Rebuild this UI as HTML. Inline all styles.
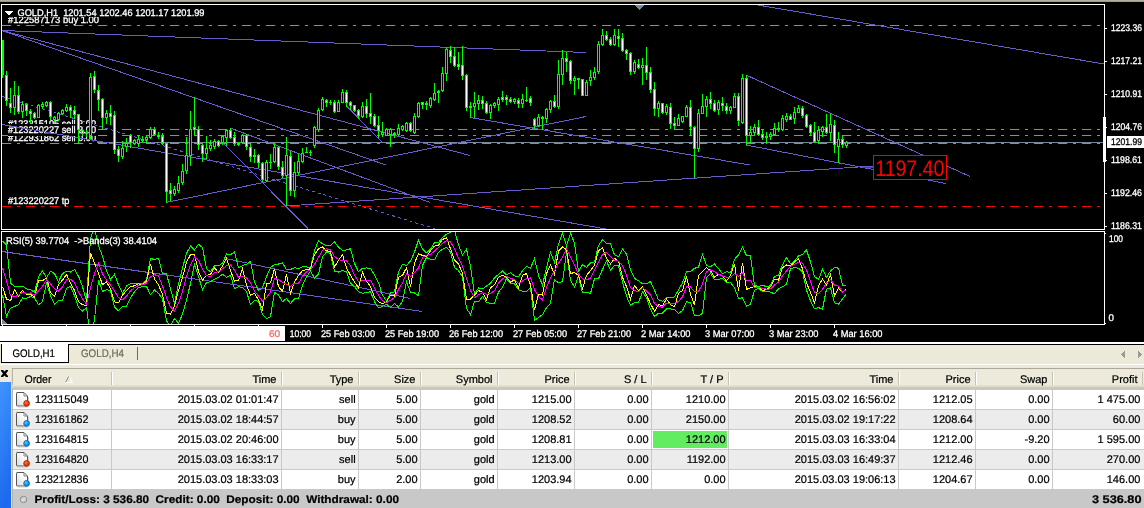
<!DOCTYPE html><html><head><meta charset="utf-8"><title>GOLD,H1</title>
<style>html,body{margin:0;padding:0;background:#ECE9D8;overflow:hidden}svg{display:block;will-change:transform}text{font-family:"Liberation Sans",sans-serif;white-space:pre}</style>
</head><body>
<svg width="1144" height="508" viewBox="0 0 1144 508" shape-rendering="crispEdges" text-rendering="geometricPrecision">
<rect x="0" y="0" width="1144" height="508" fill="#ECE9D8" />
<rect x="0" y="0" width="1144" height="1" fill="#B3AF9C" />
<rect x="0" y="1" width="1144" height="1" fill="#A09C8A" />
<rect x="0" y="2" width="1144" height="340" fill="#000" />
<defs><clipPath id="cm"><rect x="2" y="5" width="1102" height="224"/></clipPath><clipPath id="ci"><rect x="2" y="232" width="1102" height="92"/></clipPath></defs>
<g clip-path="url(#cm)">
<path d="M2 25.5h9M17 25.5h3M26 25.5h9M41 25.5h3M50 25.5h9M65 25.5h3M74 25.5h9M89 25.5h3M98 25.5h9M113 25.5h3M122 25.5h9M137 25.5h3M146 25.5h9M161 25.5h3M170 25.5h9M185 25.5h3M194 25.5h9M209 25.5h3M218 25.5h9M233 25.5h3M242 25.5h9M257 25.5h3M266 25.5h9M281 25.5h3M290 25.5h9M305 25.5h3M314 25.5h9M329 25.5h3M338 25.5h9M353 25.5h3M362 25.5h9M377 25.5h3M386 25.5h9M401 25.5h3M410 25.5h9M425 25.5h3M434 25.5h9M449 25.5h3M458 25.5h9M473 25.5h3M482 25.5h9M497 25.5h3M506 25.5h9M521 25.5h3M530 25.5h9M545 25.5h3M554 25.5h9M569 25.5h3M578 25.5h9M593 25.5h3M602 25.5h9M617 25.5h3M626 25.5h9M641 25.5h3M650 25.5h9M665 25.5h3M674 25.5h9M689 25.5h3M698 25.5h9M713 25.5h3M722 25.5h9M737 25.5h3M746 25.5h9M761 25.5h3M770 25.5h9M785 25.5h3M794 25.5h9M809 25.5h3M818 25.5h9M833 25.5h3M842 25.5h9M857 25.5h3M866 25.5h9M881 25.5h3M890 25.5h9M905 25.5h3M914 25.5h9M929 25.5h3M938 25.5h9M953 25.5h3M962 25.5h9M977 25.5h3M986 25.5h9M1001 25.5h3M1010 25.5h9M1025 25.5h3M1034 25.5h9M1049 25.5h3M1058 25.5h9M1073 25.5h3M1082 25.5h9M1097 25.5h3" stroke="#32CD32" stroke-width="1" fill="none"/>
<path d="M26 129.5h9M41 129.5h3M50 129.5h9M65 129.5h3M74 129.5h9M89 129.5h3M98 129.5h9M113 129.5h3M122 129.5h9M137 129.5h3M146 129.5h9M161 129.5h3M170 129.5h9M185 129.5h3M194 129.5h9M209 129.5h3M218 129.5h9M233 129.5h3M242 129.5h9M257 129.5h3M266 129.5h9M281 129.5h3M290 129.5h9M305 129.5h3M314 129.5h9M329 129.5h3M338 129.5h9M353 129.5h3M362 129.5h9M377 129.5h3M386 129.5h9M401 129.5h3M410 129.5h9M425 129.5h3M434 129.5h9M449 129.5h3M458 129.5h9M473 129.5h3M482 129.5h9M497 129.5h3M506 129.5h9M521 129.5h3M530 129.5h9M545 129.5h3M554 129.5h9M569 129.5h3M578 129.5h9M593 129.5h3M602 129.5h9M617 129.5h3M626 129.5h9M641 129.5h3M650 129.5h9M665 129.5h3M674 129.5h9M689 129.5h3M698 129.5h9M713 129.5h3M722 129.5h9M737 129.5h3M746 129.5h9M761 129.5h3M770 129.5h9M785 129.5h3M794 129.5h9M809 129.5h3M818 129.5h9M833 129.5h3M842 129.5h9M857 129.5h3M866 129.5h9M881 129.5h3M890 129.5h9M905 129.5h3M914 129.5h9M929 129.5h3M938 129.5h9M953 129.5h3M962 129.5h9M977 129.5h3M986 129.5h9M1001 129.5h3M1010 129.5h9M1025 129.5h3M1034 129.5h9M1049 129.5h3M1058 129.5h9M1073 129.5h3M1082 129.5h9M1097 129.5h3" stroke="#32CD32" stroke-width="1" fill="none"/>
<path d="M2 135.5h9M17 135.5h3M26 135.5h9M41 135.5h3M50 135.5h9M65 135.5h3M74 135.5h9M89 135.5h3M98 135.5h9M113 135.5h3M122 135.5h9M137 135.5h3M146 135.5h9M161 135.5h3M170 135.5h9M185 135.5h3M194 135.5h9M209 135.5h3M218 135.5h9M233 135.5h3M242 135.5h9M257 135.5h3M266 135.5h9M281 135.5h3M290 135.5h9M305 135.5h3M314 135.5h9M329 135.5h3M338 135.5h9M353 135.5h3M362 135.5h9M377 135.5h3M386 135.5h9M401 135.5h3M410 135.5h9M425 135.5h3M434 135.5h9M449 135.5h3M458 135.5h9M473 135.5h3M482 135.5h9M497 135.5h3M506 135.5h9M521 135.5h3M530 135.5h9M545 135.5h3M554 135.5h9M569 135.5h3M578 135.5h9M593 135.5h3M602 135.5h9M617 135.5h3M626 135.5h9M641 135.5h3M650 135.5h9M665 135.5h3M674 135.5h9M689 135.5h3M698 135.5h9M713 135.5h3M722 135.5h9M737 135.5h3M746 135.5h9M761 135.5h3M770 135.5h9M785 135.5h3M794 135.5h9M809 135.5h3M818 135.5h9M833 135.5h3M842 135.5h9M857 135.5h3M866 135.5h9M881 135.5h3M890 135.5h9M905 135.5h3M914 135.5h9M929 135.5h3M938 135.5h9M953 135.5h3M962 135.5h9M977 135.5h3M986 135.5h9M1001 135.5h3M1010 135.5h9M1025 135.5h3M1034 135.5h9M1049 135.5h3M1058 135.5h9M1073 135.5h3M1082 135.5h9M1097 135.5h3" stroke="#32CD32" stroke-width="1" fill="none"/>
<path d="M2 206.5h9M17 206.5h3M26 206.5h9M41 206.5h3M50 206.5h9M65 206.5h3M74 206.5h9M89 206.5h3M98 206.5h9M113 206.5h3M122 206.5h9M137 206.5h3M146 206.5h9M161 206.5h3M170 206.5h9M185 206.5h3M194 206.5h9M209 206.5h3M218 206.5h9M233 206.5h3M242 206.5h9M257 206.5h3M266 206.5h9M281 206.5h3M290 206.5h9M305 206.5h3M314 206.5h9M329 206.5h3M338 206.5h9M353 206.5h3M362 206.5h9M377 206.5h3M386 206.5h9M401 206.5h3M410 206.5h9M425 206.5h3M434 206.5h9M449 206.5h3M458 206.5h9M473 206.5h3M482 206.5h9M497 206.5h3M506 206.5h9M521 206.5h3M530 206.5h9M545 206.5h3M554 206.5h9M569 206.5h3M578 206.5h9M593 206.5h3M602 206.5h9M617 206.5h3M626 206.5h9M641 206.5h3M650 206.5h9M665 206.5h3M674 206.5h9M689 206.5h3M698 206.5h9M713 206.5h3M722 206.5h9M737 206.5h3M746 206.5h9M761 206.5h3M770 206.5h9M785 206.5h3M794 206.5h9M809 206.5h3M818 206.5h9M833 206.5h3M842 206.5h9M857 206.5h3M866 206.5h9M881 206.5h3M890 206.5h9M905 206.5h3M914 206.5h9M929 206.5h3M938 206.5h9M953 206.5h3M962 206.5h9M977 206.5h3M986 206.5h9M1001 206.5h3M1010 206.5h9M1025 206.5h3M1034 206.5h9M1049 206.5h3M1058 206.5h9M1073 206.5h3M1082 206.5h9M1097 206.5h3" stroke="#FF0000" stroke-width="1" fill="none"/>
<rect x="8" y="13" width="92" height="12" fill="#000" />
<text x="8" y="23" font-size="9.75" fill="#fff" textLength="91" lengthAdjust="spacingAndGlyphs" stroke="#fff" stroke-width="0.3" >#122587173 buy 1.00</text>
<rect x="8" y="118" width="89" height="11" fill="#000" />
<text x="8" y="127" font-size="9.75" fill="#fff" textLength="88" lengthAdjust="spacingAndGlyphs" stroke="#fff" stroke-width="0.3" >#123215105 sell 2.00</text>
<rect x="8" y="132" width="89" height="11" fill="#000" />
<text x="8" y="141" font-size="9.75" fill="#fff" textLength="88" lengthAdjust="spacingAndGlyphs" stroke="#fff" stroke-width="0.3" >#122931862 sell 0.00</text>
<rect x="8" y="124" width="89" height="12" fill="#000" />
<text x="8" y="133" font-size="9.75" fill="#fff" textLength="88" lengthAdjust="spacingAndGlyphs" stroke="#fff" stroke-width="0.3" >#123220227 sell 2.00</text>
<rect x="8" y="195" width="62" height="11" fill="#000" />
<text x="8" y="204" font-size="9.75" fill="#fff" textLength="61.5" lengthAdjust="spacingAndGlyphs" stroke="#fff" stroke-width="0.3" >#123220227 tp</text>
<path d="M2 143.5h9M17 143.5h3M26 143.5h9M41 143.5h3M50 143.5h9M65 143.5h3M74 143.5h9M89 143.5h3M98 143.5h9M113 143.5h3M122 143.5h9M137 143.5h3M146 143.5h9M161 143.5h3M170 143.5h9M185 143.5h3M194 143.5h9M209 143.5h3M218 143.5h9M233 143.5h3M242 143.5h9M257 143.5h3M266 143.5h9M281 143.5h3M290 143.5h9M305 143.5h3M314 143.5h9M329 143.5h3M338 143.5h9M353 143.5h3M362 143.5h9M377 143.5h3M386 143.5h9M401 143.5h3M410 143.5h9M425 143.5h3M434 143.5h9M449 143.5h3M458 143.5h9M473 143.5h3M482 143.5h9M497 143.5h3M506 143.5h9M521 143.5h3M530 143.5h9M545 143.5h3M554 143.5h9M569 143.5h3M578 143.5h9M593 143.5h3M602 143.5h9M617 143.5h3M626 143.5h9M641 143.5h3M650 143.5h9M665 143.5h3M674 143.5h9M689 143.5h3M698 143.5h9M713 143.5h3M722 143.5h9M737 143.5h3M746 143.5h9M761 143.5h3M770 143.5h9M785 143.5h3M794 143.5h9M809 143.5h3M818 143.5h9M833 143.5h3M842 143.5h9M857 143.5h3M866 143.5h9M881 143.5h3M890 143.5h9M905 143.5h3M914 143.5h9M929 143.5h3M938 143.5h9M953 143.5h3M962 143.5h9M977 143.5h3M986 143.5h9M1001 143.5h3M1010 143.5h9M1025 143.5h3M1034 143.5h9M1049 143.5h3M1058 143.5h9M1073 143.5h3M1082 143.5h9M1097 143.5h3" stroke="#32CD32" stroke-width="1" fill="none"/>
<rect x="3" y="6" width="204" height="11" fill="#000" />
<path d="M5 11h8l-4 4.5z" fill="#fff"/>
<text x="17.5" y="16" font-size="9.75" fill="#fff" textLength="187" lengthAdjust="spacingAndGlyphs" stroke="#fff" stroke-width="0.3" >GOLD,H1  1201.54 1202.46 1201.17 1201.99</text>
<rect x="97" y="142" width="1007" height="1" fill="#778899" />
<line x1="2" y1="30.5" x2="586" y2="52.5" stroke="#6A5ACD" stroke-width="1"/>
<line x1="2" y1="30.5" x2="470" y2="155.5" stroke="#6A5ACD" stroke-width="1"/>
<line x1="2" y1="30.5" x2="386" y2="165" stroke="#6A5ACD" stroke-width="1"/>
<line x1="2" y1="124.5" x2="612" y2="230" stroke="#6A5ACD" stroke-width="1"/>
<line x1="2" y1="96.5" x2="436" y2="229" stroke="#6A5ACD" stroke-width="1" stroke-dasharray="3 3"/>
<line x1="166" y1="202.5" x2="586" y2="116.5" stroke="#6A5ACD" stroke-width="1"/>
<line x1="286" y1="206" x2="873" y2="166" stroke="#6A5ACD" stroke-width="1"/>
<line x1="230" y1="128" x2="430" y2="202.5" stroke="#6A5ACD" stroke-width="1"/>
<line x1="222" y1="142" x2="308" y2="228.5" stroke="#6A5ACD" stroke-width="1"/>
<line x1="346" y1="105.5" x2="382" y2="142" stroke="#6A5ACD" stroke-width="1"/>
<line x1="470" y1="117.5" x2="750" y2="165" stroke="#6A5ACD" stroke-width="1"/>
<line x1="746" y1="75" x2="970" y2="176.5" stroke="#6A5ACD" stroke-width="1"/>
<line x1="746" y1="145" x2="946" y2="183.5" stroke="#6A5ACD" stroke-width="1"/>
<line x1="740" y1="2" x2="1104" y2="64" stroke="#6A5ACD" stroke-width="1"/>
<rect x="2" y="40" width="1" height="38" fill="#00FF00" />
<rect x="1" y="40" width="3" height="35" fill="#00FF00" />
<rect x="2" y="41" width="1" height="33" fill="#00FF00" />
<rect x="6" y="71" width="1" height="35" fill="#00FF00" />
<rect x="5" y="75" width="3" height="26" fill="#00FF00" />
<rect x="6" y="76" width="1" height="24" fill="#fff" />
<rect x="10" y="88" width="1" height="25" fill="#00FF00" />
<rect x="9" y="103" width="3" height="5" fill="#00FF00" />
<rect x="10" y="104" width="1" height="3" fill="#fff" />
<rect x="14" y="81" width="1" height="34" fill="#00FF00" />
<rect x="13" y="95" width="3" height="13" fill="#00FF00" />
<rect x="14" y="96" width="1" height="11" fill="#000" />
<rect x="18" y="86" width="1" height="28" fill="#00FF00" />
<rect x="17" y="95" width="3" height="17" fill="#00FF00" />
<rect x="18" y="96" width="1" height="15" fill="#fff" />
<rect x="22" y="101" width="1" height="17" fill="#00FF00" />
<rect x="21" y="104" width="3" height="8" fill="#00FF00" />
<rect x="22" y="105" width="1" height="6" fill="#000" />
<rect x="26" y="103" width="1" height="13" fill="#00FF00" />
<rect x="25" y="104" width="3" height="7" fill="#00FF00" />
<rect x="26" y="105" width="1" height="5" fill="#fff" />
<rect x="30" y="109" width="1" height="15" fill="#00FF00" />
<rect x="29" y="111" width="3" height="3" fill="#00FF00" />
<rect x="30" y="112" width="1" height="1" fill="#fff" />
<rect x="34" y="112" width="1" height="7" fill="#00FF00" />
<rect x="33" y="113" width="3" height="5" fill="#00FF00" />
<rect x="34" y="114" width="1" height="3" fill="#fff" />
<rect x="38" y="104" width="1" height="14" fill="#00FF00" />
<rect x="37" y="105" width="3" height="13" fill="#00FF00" />
<rect x="38" y="106" width="1" height="11" fill="#000" />
<rect x="42" y="102" width="1" height="7" fill="#00FF00" />
<rect x="41" y="104" width="3" height="3" fill="#00FF00" />
<rect x="42" y="105" width="1" height="1" fill="#000" />
<rect x="46" y="101" width="1" height="6" fill="#00FF00" />
<rect x="45" y="102" width="3" height="4" fill="#00FF00" />
<rect x="46" y="103" width="1" height="2" fill="#000" />
<rect x="50" y="101" width="1" height="19" fill="#00FF00" />
<rect x="49" y="102" width="3" height="15" fill="#00FF00" />
<rect x="50" y="103" width="1" height="13" fill="#fff" />
<rect x="54" y="116" width="1" height="6" fill="#00FF00" />
<rect x="53" y="117" width="3" height="3" fill="#00FF00" />
<rect x="54" y="118" width="1" height="1" fill="#000" />
<rect x="58" y="112" width="1" height="9" fill="#00FF00" />
<rect x="57" y="113" width="3" height="7" fill="#00FF00" />
<rect x="58" y="114" width="1" height="5" fill="#000" />
<rect x="62" y="109" width="1" height="6" fill="#00FF00" />
<rect x="61" y="110" width="3" height="4" fill="#00FF00" />
<rect x="62" y="111" width="1" height="2" fill="#000" />
<rect x="66" y="104" width="1" height="8" fill="#00FF00" />
<rect x="65" y="107" width="3" height="4" fill="#00FF00" />
<rect x="66" y="108" width="1" height="2" fill="#000" />
<rect x="70" y="105" width="1" height="13" fill="#00FF00" />
<rect x="69" y="107" width="3" height="4" fill="#00FF00" />
<rect x="70" y="108" width="1" height="2" fill="#fff" />
<rect x="74" y="106" width="1" height="13" fill="#00FF00" />
<rect x="73" y="110" width="3" height="5" fill="#00FF00" />
<rect x="74" y="111" width="1" height="3" fill="#fff" />
<rect x="78" y="114" width="1" height="30" fill="#00FF00" />
<rect x="77" y="114" width="3" height="16" fill="#00FF00" />
<rect x="78" y="115" width="1" height="14" fill="#fff" />
<rect x="82" y="129" width="1" height="7" fill="#00FF00" />
<rect x="81" y="130" width="3" height="4" fill="#00FF00" />
<rect x="82" y="131" width="1" height="2" fill="#fff" />
<rect x="86" y="130" width="1" height="7" fill="#00FF00" />
<rect x="85" y="132" width="3" height="2" fill="#00FF00" />
<rect x="90" y="73" width="1" height="66" fill="#00FF00" />
<rect x="89" y="77" width="3" height="59" fill="#00FF00" />
<rect x="90" y="78" width="1" height="57" fill="#000" />
<rect x="94" y="71" width="1" height="22" fill="#00FF00" />
<rect x="93" y="76" width="3" height="14" fill="#00FF00" />
<rect x="94" y="77" width="1" height="12" fill="#fff" />
<rect x="98" y="85" width="1" height="26" fill="#00FF00" />
<rect x="97" y="90" width="3" height="10" fill="#00FF00" />
<rect x="98" y="91" width="1" height="8" fill="#fff" />
<rect x="102" y="98" width="1" height="31" fill="#00FF00" />
<rect x="101" y="99" width="3" height="19" fill="#00FF00" />
<rect x="102" y="100" width="1" height="17" fill="#fff" />
<rect x="106" y="110" width="1" height="14" fill="#00FF00" />
<rect x="105" y="113" width="3" height="5" fill="#00FF00" />
<rect x="106" y="114" width="1" height="3" fill="#000" />
<rect x="110" y="105" width="1" height="20" fill="#00FF00" />
<rect x="109" y="113" width="3" height="4" fill="#00FF00" />
<rect x="110" y="114" width="1" height="2" fill="#fff" />
<rect x="114" y="111" width="1" height="43" fill="#00FF00" />
<rect x="113" y="115" width="3" height="35" fill="#00FF00" />
<rect x="114" y="116" width="1" height="33" fill="#fff" />
<rect x="118" y="146" width="1" height="16" fill="#00FF00" />
<rect x="117" y="149" width="3" height="7" fill="#00FF00" />
<rect x="118" y="150" width="1" height="5" fill="#fff" />
<rect x="122" y="141" width="1" height="18" fill="#00FF00" />
<rect x="121" y="148" width="3" height="9" fill="#00FF00" />
<rect x="122" y="149" width="1" height="7" fill="#000" />
<rect x="126" y="138" width="1" height="14" fill="#00FF00" />
<rect x="125" y="143" width="3" height="4" fill="#00FF00" />
<rect x="126" y="144" width="1" height="2" fill="#000" />
<rect x="130" y="134" width="1" height="14" fill="#00FF00" />
<rect x="129" y="135" width="3" height="8" fill="#00FF00" />
<rect x="130" y="136" width="1" height="6" fill="#fff" />
<rect x="134" y="139" width="1" height="6" fill="#00FF00" />
<rect x="133" y="140" width="3" height="4" fill="#00FF00" />
<rect x="134" y="141" width="1" height="2" fill="#000" />
<rect x="138" y="135" width="1" height="12" fill="#00FF00" />
<rect x="137" y="139" width="3" height="5" fill="#00FF00" />
<rect x="138" y="140" width="1" height="3" fill="#000" />
<rect x="142" y="136" width="1" height="7" fill="#00FF00" />
<rect x="141" y="139" width="3" height="2" fill="#00FF00" />
<rect x="146" y="135" width="1" height="8" fill="#00FF00" />
<rect x="145" y="137" width="3" height="3" fill="#00FF00" />
<rect x="146" y="138" width="1" height="1" fill="#000" />
<rect x="150" y="127" width="1" height="12" fill="#00FF00" />
<rect x="149" y="129" width="3" height="9" fill="#00FF00" />
<rect x="150" y="130" width="1" height="7" fill="#000" />
<rect x="154" y="127" width="1" height="9" fill="#00FF00" />
<rect x="153" y="129" width="3" height="6" fill="#00FF00" />
<rect x="154" y="130" width="1" height="4" fill="#fff" />
<rect x="158" y="132" width="1" height="7" fill="#00FF00" />
<rect x="157" y="135" width="3" height="2" fill="#00FF00" />
<rect x="162" y="133" width="1" height="12" fill="#00FF00" />
<rect x="161" y="136" width="3" height="7" fill="#00FF00" />
<rect x="162" y="137" width="1" height="5" fill="#fff" />
<rect x="166" y="143" width="1" height="60" fill="#00FF00" />
<rect x="165" y="143" width="3" height="49" fill="#00FF00" />
<rect x="166" y="144" width="1" height="47" fill="#fff" />
<rect x="170" y="183" width="1" height="18" fill="#00FF00" />
<rect x="169" y="190" width="3" height="4" fill="#00FF00" />
<rect x="170" y="191" width="1" height="2" fill="#fff" />
<rect x="174" y="186" width="1" height="10" fill="#00FF00" />
<rect x="173" y="189" width="3" height="5" fill="#00FF00" />
<rect x="174" y="190" width="1" height="3" fill="#000" />
<rect x="178" y="176" width="1" height="17" fill="#00FF00" />
<rect x="177" y="183" width="3" height="8" fill="#00FF00" />
<rect x="178" y="184" width="1" height="6" fill="#000" />
<rect x="182" y="164" width="1" height="21" fill="#00FF00" />
<rect x="181" y="171" width="3" height="12" fill="#00FF00" />
<rect x="182" y="172" width="1" height="10" fill="#000" />
<rect x="186" y="137" width="1" height="37" fill="#00FF00" />
<rect x="185" y="155" width="3" height="16" fill="#00FF00" />
<rect x="186" y="156" width="1" height="14" fill="#000" />
<rect x="190" y="111" width="1" height="55" fill="#00FF00" />
<rect x="189" y="129" width="3" height="27" fill="#00FF00" />
<rect x="190" y="130" width="1" height="25" fill="#000" />
<rect x="194" y="97" width="1" height="38" fill="#00FF00" />
<rect x="193" y="127" width="3" height="3" fill="#00FF00" />
<rect x="194" y="128" width="1" height="1" fill="#fff" />
<rect x="198" y="126" width="1" height="24" fill="#00FF00" />
<rect x="197" y="129" width="3" height="16" fill="#00FF00" />
<rect x="198" y="130" width="1" height="14" fill="#fff" />
<rect x="202" y="144" width="1" height="18" fill="#00FF00" />
<rect x="201" y="145" width="3" height="9" fill="#00FF00" />
<rect x="202" y="146" width="1" height="7" fill="#fff" />
<rect x="206" y="136" width="1" height="23" fill="#00FF00" />
<rect x="205" y="148" width="3" height="6" fill="#00FF00" />
<rect x="206" y="149" width="1" height="4" fill="#000" />
<rect x="210" y="140" width="1" height="11" fill="#00FF00" />
<rect x="209" y="145" width="3" height="4" fill="#00FF00" />
<rect x="210" y="146" width="1" height="2" fill="#000" />
<rect x="214" y="139" width="1" height="10" fill="#00FF00" />
<rect x="213" y="141" width="3" height="6" fill="#00FF00" />
<rect x="214" y="142" width="1" height="4" fill="#000" />
<rect x="218" y="140" width="1" height="7" fill="#00FF00" />
<rect x="217" y="141" width="3" height="5" fill="#00FF00" />
<rect x="218" y="142" width="1" height="3" fill="#fff" />
<rect x="222" y="135" width="1" height="10" fill="#00FF00" />
<rect x="221" y="136" width="3" height="7" fill="#00FF00" />
<rect x="222" y="137" width="1" height="5" fill="#000" />
<rect x="226" y="129" width="1" height="17" fill="#00FF00" />
<rect x="225" y="130" width="3" height="8" fill="#00FF00" />
<rect x="226" y="131" width="1" height="6" fill="#000" />
<rect x="230" y="128" width="1" height="11" fill="#00FF00" />
<rect x="229" y="130" width="3" height="8" fill="#00FF00" />
<rect x="230" y="131" width="1" height="6" fill="#fff" />
<rect x="234" y="132" width="1" height="14" fill="#00FF00" />
<rect x="233" y="137" width="3" height="7" fill="#00FF00" />
<rect x="234" y="138" width="1" height="5" fill="#fff" />
<rect x="238" y="142" width="1" height="4" fill="#00FF00" />
<rect x="237" y="143" width="3" height="2" fill="#00FF00" />
<rect x="242" y="134" width="1" height="10" fill="#00FF00" />
<rect x="241" y="135" width="3" height="8" fill="#00FF00" />
<rect x="242" y="136" width="1" height="6" fill="#000" />
<rect x="246" y="134" width="1" height="16" fill="#00FF00" />
<rect x="245" y="135" width="3" height="12" fill="#00FF00" />
<rect x="246" y="136" width="1" height="10" fill="#fff" />
<rect x="250" y="143" width="1" height="19" fill="#00FF00" />
<rect x="249" y="147" width="3" height="10" fill="#00FF00" />
<rect x="250" y="148" width="1" height="8" fill="#fff" />
<rect x="254" y="149" width="1" height="14" fill="#00FF00" />
<rect x="253" y="155" width="3" height="2" fill="#00FF00" />
<rect x="258" y="154" width="1" height="14" fill="#00FF00" />
<rect x="257" y="155" width="3" height="8" fill="#00FF00" />
<rect x="258" y="156" width="1" height="6" fill="#fff" />
<rect x="262" y="162" width="1" height="20" fill="#00FF00" />
<rect x="261" y="163" width="3" height="17" fill="#00FF00" />
<rect x="262" y="164" width="1" height="15" fill="#fff" />
<rect x="266" y="160" width="1" height="22" fill="#00FF00" />
<rect x="265" y="162" width="3" height="19" fill="#00FF00" />
<rect x="266" y="163" width="1" height="17" fill="#000" />
<rect x="270" y="154" width="1" height="15" fill="#00FF00" />
<rect x="269" y="162" width="3" height="1" fill="#00FF00" />
<rect x="274" y="143" width="1" height="20" fill="#00FF00" />
<rect x="273" y="147" width="3" height="15" fill="#00FF00" />
<rect x="274" y="148" width="1" height="13" fill="#000" />
<rect x="278" y="146" width="1" height="24" fill="#00FF00" />
<rect x="277" y="147" width="3" height="20" fill="#00FF00" />
<rect x="278" y="148" width="1" height="18" fill="#fff" />
<rect x="282" y="161" width="1" height="17" fill="#00FF00" />
<rect x="281" y="167" width="3" height="9" fill="#00FF00" />
<rect x="282" y="168" width="1" height="7" fill="#fff" />
<rect x="286" y="137" width="1" height="69" fill="#00FF00" />
<rect x="285" y="155" width="3" height="21" fill="#00FF00" />
<rect x="286" y="156" width="1" height="19" fill="#000" />
<rect x="290" y="151" width="1" height="45" fill="#00FF00" />
<rect x="289" y="156" width="3" height="35" fill="#00FF00" />
<rect x="290" y="157" width="1" height="33" fill="#fff" />
<rect x="294" y="162" width="1" height="35" fill="#00FF00" />
<rect x="293" y="172" width="3" height="19" fill="#00FF00" />
<rect x="294" y="173" width="1" height="17" fill="#000" />
<rect x="298" y="154" width="1" height="21" fill="#00FF00" />
<rect x="297" y="161" width="3" height="12" fill="#00FF00" />
<rect x="298" y="162" width="1" height="10" fill="#000" />
<rect x="302" y="148" width="1" height="15" fill="#00FF00" />
<rect x="301" y="153" width="3" height="9" fill="#00FF00" />
<rect x="302" y="154" width="1" height="7" fill="#000" />
<rect x="306" y="147" width="1" height="6" fill="#00FF00" />
<rect x="305" y="152" width="3" height="1" fill="#00FF00" />
<rect x="310" y="150" width="1" height="6" fill="#00FF00" />
<rect x="309" y="152" width="3" height="1" fill="#00FF00" />
<rect x="314" y="126" width="1" height="22" fill="#00FF00" />
<rect x="313" y="127" width="3" height="19" fill="#00FF00" />
<rect x="314" y="128" width="1" height="17" fill="#000" />
<rect x="318" y="108" width="1" height="24" fill="#00FF00" />
<rect x="317" y="110" width="3" height="20" fill="#00FF00" />
<rect x="318" y="111" width="1" height="18" fill="#000" />
<rect x="322" y="97" width="1" height="14" fill="#00FF00" />
<rect x="321" y="99" width="3" height="11" fill="#00FF00" />
<rect x="322" y="100" width="1" height="9" fill="#000" />
<rect x="326" y="99" width="1" height="8" fill="#00FF00" />
<rect x="325" y="100" width="3" height="3" fill="#00FF00" />
<rect x="326" y="101" width="1" height="1" fill="#fff" />
<rect x="330" y="100" width="1" height="5" fill="#00FF00" />
<rect x="329" y="102" width="3" height="1" fill="#00FF00" />
<rect x="334" y="100" width="1" height="13" fill="#00FF00" />
<rect x="333" y="102" width="3" height="10" fill="#00FF00" />
<rect x="334" y="103" width="1" height="8" fill="#fff" />
<rect x="338" y="100" width="1" height="12" fill="#00FF00" />
<rect x="337" y="102" width="3" height="10" fill="#00FF00" />
<rect x="338" y="103" width="1" height="8" fill="#000" />
<rect x="342" y="89" width="1" height="14" fill="#00FF00" />
<rect x="341" y="92" width="3" height="11" fill="#00FF00" />
<rect x="342" y="93" width="1" height="9" fill="#000" />
<rect x="346" y="90" width="1" height="17" fill="#00FF00" />
<rect x="345" y="92" width="3" height="11" fill="#00FF00" />
<rect x="346" y="93" width="1" height="9" fill="#fff" />
<rect x="350" y="101" width="1" height="9" fill="#00FF00" />
<rect x="349" y="102" width="3" height="4" fill="#00FF00" />
<rect x="350" y="103" width="1" height="2" fill="#fff" />
<rect x="354" y="105" width="1" height="7" fill="#00FF00" />
<rect x="353" y="105" width="3" height="6" fill="#00FF00" />
<rect x="354" y="106" width="1" height="4" fill="#fff" />
<rect x="358" y="109" width="1" height="10" fill="#00FF00" />
<rect x="357" y="110" width="3" height="6" fill="#00FF00" />
<rect x="358" y="111" width="1" height="4" fill="#fff" />
<rect x="362" y="102" width="1" height="16" fill="#00FF00" />
<rect x="361" y="106" width="3" height="11" fill="#00FF00" />
<rect x="362" y="107" width="1" height="9" fill="#000" />
<rect x="366" y="99" width="1" height="19" fill="#00FF00" />
<rect x="365" y="106" width="3" height="8" fill="#00FF00" />
<rect x="366" y="107" width="1" height="6" fill="#fff" />
<rect x="370" y="93" width="1" height="31" fill="#00FF00" />
<rect x="369" y="113" width="3" height="4" fill="#00FF00" />
<rect x="370" y="114" width="1" height="2" fill="#fff" />
<rect x="374" y="114" width="1" height="13" fill="#00FF00" />
<rect x="373" y="116" width="3" height="10" fill="#00FF00" />
<rect x="374" y="117" width="1" height="8" fill="#fff" />
<rect x="378" y="116" width="1" height="22" fill="#00FF00" />
<rect x="377" y="125" width="3" height="6" fill="#00FF00" />
<rect x="378" y="126" width="1" height="4" fill="#fff" />
<rect x="382" y="122" width="1" height="15" fill="#00FF00" />
<rect x="381" y="132" width="3" height="3" fill="#00FF00" />
<rect x="382" y="133" width="1" height="1" fill="#000" />
<rect x="386" y="128" width="1" height="8" fill="#00FF00" />
<rect x="385" y="129" width="3" height="7" fill="#00FF00" />
<rect x="386" y="130" width="1" height="5" fill="#000" />
<rect x="390" y="128" width="1" height="19" fill="#00FF00" />
<rect x="389" y="129" width="3" height="6" fill="#00FF00" />
<rect x="390" y="130" width="1" height="4" fill="#000" />
<rect x="394" y="132" width="1" height="6" fill="#00FF00" />
<rect x="393" y="133" width="3" height="2" fill="#00FF00" />
<rect x="398" y="124" width="1" height="12" fill="#00FF00" />
<rect x="397" y="128" width="3" height="7" fill="#00FF00" />
<rect x="398" y="129" width="1" height="5" fill="#000" />
<rect x="402" y="125" width="1" height="6" fill="#00FF00" />
<rect x="401" y="126" width="3" height="4" fill="#00FF00" />
<rect x="402" y="127" width="1" height="2" fill="#000" />
<rect x="406" y="122" width="1" height="10" fill="#00FF00" />
<rect x="405" y="123" width="3" height="8" fill="#00FF00" />
<rect x="406" y="124" width="1" height="6" fill="#000" />
<rect x="410" y="122" width="1" height="10" fill="#00FF00" />
<rect x="409" y="123" width="3" height="8" fill="#00FF00" />
<rect x="410" y="124" width="1" height="6" fill="#fff" />
<rect x="414" y="113" width="1" height="21" fill="#00FF00" />
<rect x="413" y="116" width="3" height="17" fill="#00FF00" />
<rect x="414" y="117" width="1" height="15" fill="#000" />
<rect x="418" y="102" width="1" height="16" fill="#00FF00" />
<rect x="417" y="103" width="3" height="14" fill="#00FF00" />
<rect x="418" y="104" width="1" height="12" fill="#000" />
<rect x="422" y="102" width="1" height="7" fill="#00FF00" />
<rect x="421" y="102" width="3" height="3" fill="#00FF00" />
<rect x="422" y="103" width="1" height="1" fill="#fff" />
<rect x="426" y="101" width="1" height="9" fill="#00FF00" />
<rect x="425" y="103" width="3" height="2" fill="#00FF00" />
<rect x="430" y="97" width="1" height="11" fill="#00FF00" />
<rect x="429" y="98" width="3" height="8" fill="#00FF00" />
<rect x="430" y="99" width="1" height="6" fill="#000" />
<rect x="434" y="83" width="1" height="18" fill="#00FF00" />
<rect x="433" y="93" width="3" height="7" fill="#00FF00" />
<rect x="434" y="94" width="1" height="5" fill="#000" />
<rect x="438" y="90" width="1" height="13" fill="#00FF00" />
<rect x="437" y="91" width="3" height="2" fill="#00FF00" />
<rect x="442" y="67" width="1" height="25" fill="#00FF00" />
<rect x="441" y="73" width="3" height="18" fill="#00FF00" />
<rect x="442" y="74" width="1" height="16" fill="#000" />
<rect x="446" y="47" width="1" height="34" fill="#00FF00" />
<rect x="445" y="49" width="3" height="25" fill="#00FF00" />
<rect x="446" y="50" width="1" height="23" fill="#000" />
<rect x="450" y="46" width="1" height="17" fill="#00FF00" />
<rect x="449" y="50" width="3" height="7" fill="#00FF00" />
<rect x="450" y="51" width="1" height="5" fill="#fff" />
<rect x="454" y="47" width="1" height="20" fill="#00FF00" />
<rect x="453" y="56" width="3" height="10" fill="#00FF00" />
<rect x="454" y="57" width="1" height="8" fill="#fff" />
<rect x="458" y="52" width="1" height="18" fill="#00FF00" />
<rect x="457" y="64" width="3" height="3" fill="#00FF00" />
<rect x="458" y="65" width="1" height="1" fill="#fff" />
<rect x="462" y="46" width="1" height="34" fill="#00FF00" />
<rect x="461" y="65" width="3" height="11" fill="#00FF00" />
<rect x="462" y="66" width="1" height="9" fill="#fff" />
<rect x="466" y="74" width="1" height="37" fill="#00FF00" />
<rect x="465" y="75" width="3" height="33" fill="#00FF00" />
<rect x="466" y="76" width="1" height="31" fill="#fff" />
<rect x="470" y="102" width="1" height="16" fill="#00FF00" />
<rect x="469" y="106" width="3" height="2" fill="#00FF00" />
<rect x="474" y="92" width="1" height="26" fill="#00FF00" />
<rect x="473" y="103" width="3" height="4" fill="#00FF00" />
<rect x="474" y="104" width="1" height="2" fill="#000" />
<rect x="478" y="95" width="1" height="15" fill="#00FF00" />
<rect x="477" y="100" width="3" height="4" fill="#00FF00" />
<rect x="478" y="101" width="1" height="2" fill="#000" />
<rect x="482" y="96" width="1" height="13" fill="#00FF00" />
<rect x="481" y="100" width="3" height="4" fill="#00FF00" />
<rect x="482" y="101" width="1" height="2" fill="#fff" />
<rect x="486" y="101" width="1" height="13" fill="#00FF00" />
<rect x="485" y="103" width="3" height="10" fill="#00FF00" />
<rect x="486" y="104" width="1" height="8" fill="#fff" />
<rect x="490" y="104" width="1" height="15" fill="#00FF00" />
<rect x="489" y="105" width="3" height="8" fill="#00FF00" />
<rect x="490" y="106" width="1" height="6" fill="#000" />
<rect x="494" y="102" width="1" height="6" fill="#00FF00" />
<rect x="493" y="103" width="3" height="3" fill="#00FF00" />
<rect x="494" y="104" width="1" height="1" fill="#000" />
<rect x="498" y="97" width="1" height="14" fill="#00FF00" />
<rect x="497" y="99" width="3" height="6" fill="#00FF00" />
<rect x="498" y="100" width="1" height="4" fill="#000" />
<rect x="502" y="91" width="1" height="11" fill="#00FF00" />
<rect x="501" y="97" width="3" height="3" fill="#00FF00" />
<rect x="502" y="98" width="1" height="1" fill="#fff" />
<rect x="506" y="95" width="1" height="10" fill="#00FF00" />
<rect x="505" y="97" width="3" height="3" fill="#00FF00" />
<rect x="506" y="98" width="1" height="1" fill="#fff" />
<rect x="510" y="97" width="1" height="6" fill="#00FF00" />
<rect x="509" y="99" width="3" height="3" fill="#00FF00" />
<rect x="510" y="100" width="1" height="1" fill="#fff" />
<rect x="514" y="98" width="1" height="6" fill="#00FF00" />
<rect x="513" y="99" width="3" height="3" fill="#00FF00" />
<rect x="514" y="100" width="1" height="1" fill="#000" />
<rect x="518" y="98" width="1" height="10" fill="#00FF00" />
<rect x="517" y="100" width="3" height="4" fill="#00FF00" />
<rect x="518" y="101" width="1" height="2" fill="#fff" />
<rect x="522" y="94" width="1" height="14" fill="#00FF00" />
<rect x="521" y="99" width="3" height="5" fill="#00FF00" />
<rect x="522" y="100" width="1" height="3" fill="#000" />
<rect x="526" y="87" width="1" height="15" fill="#00FF00" />
<rect x="525" y="100" width="3" height="1" fill="#00FF00" />
<rect x="530" y="96" width="1" height="10" fill="#00FF00" />
<rect x="529" y="98" width="3" height="5" fill="#00FF00" />
<rect x="530" y="99" width="1" height="3" fill="#fff" />
<rect x="534" y="118" width="1" height="11" fill="#00FF00" />
<rect x="533" y="119" width="3" height="7" fill="#00FF00" />
<rect x="534" y="120" width="1" height="5" fill="#fff" />
<rect x="538" y="114" width="1" height="13" fill="#00FF00" />
<rect x="537" y="117" width="3" height="9" fill="#00FF00" />
<rect x="538" y="118" width="1" height="7" fill="#000" />
<rect x="542" y="116" width="1" height="14" fill="#00FF00" />
<rect x="541" y="117" width="3" height="2" fill="#00FF00" />
<rect x="546" y="108" width="1" height="15" fill="#00FF00" />
<rect x="545" y="109" width="3" height="10" fill="#00FF00" />
<rect x="546" y="110" width="1" height="8" fill="#000" />
<rect x="550" y="100" width="1" height="13" fill="#00FF00" />
<rect x="549" y="101" width="3" height="9" fill="#00FF00" />
<rect x="550" y="102" width="1" height="7" fill="#000" />
<rect x="554" y="95" width="1" height="13" fill="#00FF00" />
<rect x="553" y="101" width="3" height="6" fill="#00FF00" />
<rect x="554" y="102" width="1" height="4" fill="#fff" />
<rect x="558" y="60" width="1" height="49" fill="#00FF00" />
<rect x="557" y="74" width="3" height="33" fill="#00FF00" />
<rect x="558" y="75" width="1" height="31" fill="#000" />
<rect x="562" y="50" width="1" height="35" fill="#00FF00" />
<rect x="561" y="58" width="3" height="17" fill="#00FF00" />
<rect x="562" y="59" width="1" height="15" fill="#000" />
<rect x="566" y="52" width="1" height="20" fill="#00FF00" />
<rect x="565" y="58" width="3" height="4" fill="#00FF00" />
<rect x="566" y="59" width="1" height="2" fill="#fff" />
<rect x="570" y="60" width="1" height="24" fill="#00FF00" />
<rect x="569" y="61" width="3" height="20" fill="#00FF00" />
<rect x="570" y="62" width="1" height="18" fill="#fff" />
<rect x="574" y="76" width="1" height="19" fill="#00FF00" />
<rect x="573" y="78" width="3" height="3" fill="#00FF00" />
<rect x="574" y="79" width="1" height="1" fill="#000" />
<rect x="578" y="78" width="1" height="11" fill="#00FF00" />
<rect x="577" y="78" width="3" height="2" fill="#00FF00" />
<rect x="582" y="79" width="1" height="17" fill="#00FF00" />
<rect x="581" y="79" width="3" height="17" fill="#00FF00" />
<rect x="582" y="80" width="1" height="15" fill="#fff" />
<rect x="586" y="80" width="1" height="16" fill="#00FF00" />
<rect x="585" y="82" width="3" height="14" fill="#00FF00" />
<rect x="586" y="83" width="1" height="12" fill="#000" />
<rect x="590" y="70" width="1" height="16" fill="#00FF00" />
<rect x="589" y="77" width="3" height="4" fill="#00FF00" />
<rect x="590" y="78" width="1" height="2" fill="#000" />
<rect x="594" y="67" width="1" height="13" fill="#00FF00" />
<rect x="593" y="72" width="3" height="6" fill="#00FF00" />
<rect x="594" y="73" width="1" height="4" fill="#000" />
<rect x="598" y="41" width="1" height="33" fill="#00FF00" />
<rect x="597" y="44" width="3" height="28" fill="#00FF00" />
<rect x="598" y="45" width="1" height="26" fill="#000" />
<rect x="602" y="29" width="1" height="17" fill="#00FF00" />
<rect x="601" y="35" width="3" height="10" fill="#00FF00" />
<rect x="602" y="36" width="1" height="8" fill="#000" />
<rect x="606" y="31" width="1" height="10" fill="#00FF00" />
<rect x="605" y="35" width="3" height="5" fill="#00FF00" />
<rect x="606" y="36" width="1" height="3" fill="#fff" />
<rect x="610" y="37" width="1" height="9" fill="#00FF00" />
<rect x="609" y="39" width="3" height="6" fill="#00FF00" />
<rect x="610" y="40" width="1" height="4" fill="#fff" />
<rect x="614" y="29" width="1" height="17" fill="#00FF00" />
<rect x="613" y="35" width="3" height="10" fill="#00FF00" />
<rect x="614" y="36" width="1" height="8" fill="#000" />
<rect x="618" y="29" width="1" height="18" fill="#00FF00" />
<rect x="617" y="36" width="3" height="3" fill="#00FF00" />
<rect x="618" y="37" width="1" height="1" fill="#fff" />
<rect x="622" y="33" width="1" height="19" fill="#00FF00" />
<rect x="621" y="38" width="3" height="13" fill="#00FF00" />
<rect x="622" y="39" width="1" height="11" fill="#fff" />
<rect x="626" y="49" width="1" height="11" fill="#00FF00" />
<rect x="625" y="50" width="3" height="4" fill="#00FF00" />
<rect x="626" y="51" width="1" height="2" fill="#fff" />
<rect x="630" y="52" width="1" height="23" fill="#00FF00" />
<rect x="629" y="53" width="3" height="19" fill="#00FF00" />
<rect x="630" y="54" width="1" height="17" fill="#fff" />
<rect x="634" y="60" width="1" height="14" fill="#00FF00" />
<rect x="633" y="62" width="3" height="10" fill="#00FF00" />
<rect x="634" y="63" width="1" height="8" fill="#000" />
<rect x="638" y="59" width="1" height="10" fill="#00FF00" />
<rect x="637" y="64" width="3" height="4" fill="#00FF00" />
<rect x="638" y="65" width="1" height="2" fill="#fff" />
<rect x="642" y="58" width="1" height="27" fill="#00FF00" />
<rect x="641" y="65" width="3" height="3" fill="#00FF00" />
<rect x="642" y="66" width="1" height="1" fill="#000" />
<rect x="646" y="47" width="1" height="33" fill="#00FF00" />
<rect x="645" y="65" width="3" height="8" fill="#00FF00" />
<rect x="646" y="66" width="1" height="6" fill="#fff" />
<rect x="650" y="67" width="1" height="26" fill="#00FF00" />
<rect x="649" y="72" width="3" height="18" fill="#00FF00" />
<rect x="650" y="73" width="1" height="16" fill="#fff" />
<rect x="654" y="82" width="1" height="34" fill="#00FF00" />
<rect x="653" y="89" width="3" height="20" fill="#00FF00" />
<rect x="654" y="90" width="1" height="18" fill="#fff" />
<rect x="658" y="101" width="1" height="16" fill="#00FF00" />
<rect x="657" y="103" width="3" height="6" fill="#00FF00" />
<rect x="658" y="104" width="1" height="4" fill="#000" />
<rect x="662" y="103" width="1" height="11" fill="#00FF00" />
<rect x="661" y="103" width="3" height="10" fill="#00FF00" />
<rect x="662" y="104" width="1" height="8" fill="#fff" />
<rect x="666" y="104" width="1" height="11" fill="#00FF00" />
<rect x="665" y="106" width="3" height="7" fill="#00FF00" />
<rect x="666" y="107" width="1" height="5" fill="#000" />
<rect x="670" y="103" width="1" height="26" fill="#00FF00" />
<rect x="669" y="107" width="3" height="17" fill="#00FF00" />
<rect x="670" y="108" width="1" height="15" fill="#fff" />
<rect x="674" y="117" width="1" height="13" fill="#00FF00" />
<rect x="673" y="123" width="3" height="3" fill="#00FF00" />
<rect x="674" y="124" width="1" height="1" fill="#fff" />
<rect x="678" y="114" width="1" height="12" fill="#00FF00" />
<rect x="677" y="118" width="3" height="8" fill="#00FF00" />
<rect x="678" y="119" width="1" height="6" fill="#000" />
<rect x="682" y="116" width="1" height="7" fill="#00FF00" />
<rect x="681" y="116" width="3" height="6" fill="#00FF00" />
<rect x="682" y="117" width="1" height="4" fill="#000" />
<rect x="686" y="105" width="1" height="12" fill="#00FF00" />
<rect x="685" y="107" width="3" height="10" fill="#00FF00" />
<rect x="686" y="108" width="1" height="8" fill="#000" />
<rect x="690" y="100" width="1" height="36" fill="#00FF00" />
<rect x="689" y="107" width="3" height="20" fill="#00FF00" />
<rect x="690" y="108" width="1" height="18" fill="#fff" />
<rect x="694" y="126" width="1" height="52" fill="#00FF00" />
<rect x="693" y="127" width="3" height="22" fill="#00FF00" />
<rect x="694" y="128" width="1" height="20" fill="#fff" />
<rect x="698" y="109" width="1" height="43" fill="#00FF00" />
<rect x="697" y="113" width="3" height="36" fill="#00FF00" />
<rect x="698" y="114" width="1" height="34" fill="#000" />
<rect x="702" y="94" width="1" height="20" fill="#00FF00" />
<rect x="701" y="106" width="3" height="8" fill="#00FF00" />
<rect x="702" y="107" width="1" height="6" fill="#000" />
<rect x="706" y="96" width="1" height="21" fill="#00FF00" />
<rect x="705" y="99" width="3" height="8" fill="#00FF00" />
<rect x="706" y="100" width="1" height="6" fill="#000" />
<rect x="710" y="92" width="1" height="17" fill="#00FF00" />
<rect x="709" y="99" width="3" height="5" fill="#00FF00" />
<rect x="710" y="100" width="1" height="3" fill="#fff" />
<rect x="714" y="100" width="1" height="12" fill="#00FF00" />
<rect x="713" y="103" width="3" height="8" fill="#00FF00" />
<rect x="714" y="104" width="1" height="6" fill="#fff" />
<rect x="718" y="100" width="1" height="15" fill="#00FF00" />
<rect x="717" y="102" width="3" height="8" fill="#00FF00" />
<rect x="718" y="103" width="1" height="6" fill="#000" />
<rect x="722" y="97" width="1" height="14" fill="#00FF00" />
<rect x="721" y="103" width="3" height="3" fill="#00FF00" />
<rect x="722" y="104" width="1" height="1" fill="#fff" />
<rect x="726" y="103" width="1" height="11" fill="#00FF00" />
<rect x="725" y="106" width="3" height="5" fill="#00FF00" />
<rect x="726" y="107" width="1" height="3" fill="#fff" />
<rect x="730" y="106" width="1" height="8" fill="#00FF00" />
<rect x="729" y="107" width="3" height="4" fill="#00FF00" />
<rect x="730" y="108" width="1" height="2" fill="#000" />
<rect x="734" y="93" width="1" height="15" fill="#00FF00" />
<rect x="733" y="96" width="3" height="12" fill="#00FF00" />
<rect x="734" y="97" width="1" height="10" fill="#000" />
<rect x="738" y="93" width="1" height="33" fill="#00FF00" />
<rect x="737" y="96" width="3" height="25" fill="#00FF00" />
<rect x="738" y="97" width="1" height="23" fill="#fff" />
<rect x="742" y="74" width="1" height="50" fill="#00FF00" />
<rect x="741" y="78" width="3" height="45" fill="#00FF00" />
<rect x="742" y="79" width="1" height="43" fill="#000" />
<rect x="746" y="75" width="1" height="70" fill="#00FF00" />
<rect x="745" y="78" width="3" height="58" fill="#00FF00" />
<rect x="746" y="79" width="1" height="56" fill="#fff" />
<rect x="750" y="126" width="1" height="17" fill="#00FF00" />
<rect x="749" y="132" width="3" height="4" fill="#00FF00" />
<rect x="750" y="133" width="1" height="2" fill="#000" />
<rect x="754" y="124" width="1" height="11" fill="#00FF00" />
<rect x="753" y="127" width="3" height="6" fill="#00FF00" />
<rect x="754" y="128" width="1" height="4" fill="#000" />
<rect x="758" y="120" width="1" height="16" fill="#00FF00" />
<rect x="757" y="127" width="3" height="8" fill="#00FF00" />
<rect x="758" y="128" width="1" height="6" fill="#fff" />
<rect x="762" y="129" width="1" height="11" fill="#00FF00" />
<rect x="761" y="134" width="3" height="4" fill="#00FF00" />
<rect x="762" y="135" width="1" height="2" fill="#fff" />
<rect x="766" y="132" width="1" height="12" fill="#00FF00" />
<rect x="765" y="136" width="3" height="2" fill="#00FF00" />
<rect x="770" y="132" width="1" height="8" fill="#00FF00" />
<rect x="769" y="134" width="3" height="3" fill="#00FF00" />
<rect x="770" y="135" width="1" height="1" fill="#000" />
<rect x="774" y="123" width="1" height="13" fill="#00FF00" />
<rect x="773" y="128" width="3" height="7" fill="#00FF00" />
<rect x="774" y="129" width="1" height="5" fill="#000" />
<rect x="778" y="122" width="1" height="10" fill="#00FF00" />
<rect x="777" y="128" width="3" height="2" fill="#00FF00" />
<rect x="782" y="115" width="1" height="16" fill="#00FF00" />
<rect x="781" y="118" width="3" height="12" fill="#00FF00" />
<rect x="782" y="119" width="1" height="10" fill="#000" />
<rect x="786" y="113" width="1" height="9" fill="#00FF00" />
<rect x="785" y="116" width="3" height="4" fill="#00FF00" />
<rect x="786" y="117" width="1" height="2" fill="#000" />
<rect x="790" y="114" width="1" height="6" fill="#00FF00" />
<rect x="789" y="116" width="3" height="4" fill="#00FF00" />
<rect x="790" y="117" width="1" height="2" fill="#fff" />
<rect x="794" y="107" width="1" height="17" fill="#00FF00" />
<rect x="793" y="112" width="3" height="7" fill="#00FF00" />
<rect x="794" y="113" width="1" height="5" fill="#000" />
<rect x="798" y="105" width="1" height="8" fill="#00FF00" />
<rect x="797" y="108" width="3" height="5" fill="#00FF00" />
<rect x="798" y="109" width="1" height="3" fill="#000" />
<rect x="802" y="106" width="1" height="12" fill="#00FF00" />
<rect x="801" y="108" width="3" height="8" fill="#00FF00" />
<rect x="802" y="109" width="1" height="6" fill="#fff" />
<rect x="806" y="114" width="1" height="14" fill="#00FF00" />
<rect x="805" y="115" width="3" height="12" fill="#00FF00" />
<rect x="806" y="116" width="1" height="10" fill="#fff" />
<rect x="810" y="124" width="1" height="12" fill="#00FF00" />
<rect x="809" y="125" width="3" height="8" fill="#00FF00" />
<rect x="810" y="126" width="1" height="6" fill="#fff" />
<rect x="814" y="122" width="1" height="21" fill="#00FF00" />
<rect x="813" y="132" width="3" height="10" fill="#00FF00" />
<rect x="814" y="133" width="1" height="8" fill="#fff" />
<rect x="818" y="126" width="1" height="18" fill="#00FF00" />
<rect x="817" y="130" width="3" height="11" fill="#00FF00" />
<rect x="818" y="131" width="1" height="9" fill="#000" />
<rect x="822" y="126" width="1" height="11" fill="#00FF00" />
<rect x="821" y="127" width="3" height="5" fill="#00FF00" />
<rect x="822" y="128" width="1" height="3" fill="#000" />
<rect x="826" y="114" width="1" height="20" fill="#00FF00" />
<rect x="825" y="127" width="3" height="6" fill="#00FF00" />
<rect x="826" y="128" width="1" height="4" fill="#fff" />
<rect x="830" y="113" width="1" height="28" fill="#00FF00" />
<rect x="829" y="124" width="3" height="9" fill="#00FF00" />
<rect x="830" y="125" width="1" height="7" fill="#000" />
<rect x="834" y="120" width="1" height="33" fill="#00FF00" />
<rect x="833" y="125" width="3" height="20" fill="#00FF00" />
<rect x="834" y="126" width="1" height="18" fill="#fff" />
<rect x="838" y="132" width="1" height="31" fill="#00FF00" />
<rect x="837" y="139" width="3" height="8" fill="#00FF00" />
<rect x="838" y="140" width="1" height="6" fill="#000" />
<rect x="842" y="135" width="1" height="13" fill="#00FF00" />
<rect x="841" y="139" width="3" height="6" fill="#00FF00" />
<rect x="842" y="140" width="1" height="4" fill="#fff" />
<rect x="846" y="141" width="1" height="7" fill="#00FF00" />
<rect x="845" y="142" width="3" height="4" fill="#00FF00" />
<rect x="846" y="143" width="1" height="2" fill="#000" />
<rect x="863" y="167" width="11" height="1" fill="#FF0000" />
<rect x="873.5" y="155.5" width="73" height="24" fill="#000" stroke="#FF0000" stroke-width="1"/>
</g>
<text x="875.3" y="176.3" font-size="22.6" fill="#FF0000" textLength="69" lengthAdjust="spacingAndGlyphs" shape-rendering="auto">1197.40</text>
<g clip-path="url(#ci)">
<line x1="2" y1="251.5" x2="422" y2="311.5" stroke="#6A5ACD" stroke-width="1"/>
<line x1="226" y1="258.5" x2="410.5" y2="298.5" stroke="#6A5ACD" stroke-width="1"/>
<polyline points="2.5,240.9 6.5,245.0 10.5,283.0 14.5,286.6 18.5,286.2 22.5,286.2 26.5,288.9 30.5,289.4 34.5,292.5 38.5,276.8 42.5,270.9 46.5,277.5 50.5,271.4 54.5,273.5 58.5,281.7 62.5,273.5 66.5,271.3 70.5,272.1 74.5,269.5 78.5,276.2 82.5,286.7 86.5,300.8 90.5,238.2 94.5,228.0 98.5,246.1 102.5,256.0 106.5,270.5 110.5,279.7 114.5,274.3 118.5,284.8 122.5,293.2 126.5,286.0 130.5,283.8 134.5,283.6 138.5,283.1 142.5,283.3 146.5,280.0 150.5,258.5 154.5,259.5 158.5,258.4 162.5,273.6 166.5,273.8 170.5,288.9 174.5,303.4 178.5,283.9 182.5,268.0 186.5,253.5 190.5,245.8 194.5,250.0 198.5,244.2 202.5,247.5 206.5,268.7 210.5,271.7 214.5,265.8 218.5,266.0 222.5,263.2 226.5,254.0 230.5,254.9 234.5,251.5 238.5,267.9 242.5,265.5 246.5,264.4 250.5,261.2 254.5,282.1 258.5,290.6 262.5,287.7 266.5,276.7 270.5,267.5 274.5,264.7 278.5,264.0 282.5,262.8 286.5,269.8 290.5,269.4 294.5,267.7 298.5,268.7 302.5,266.7 306.5,266.9 310.5,268.2 314.5,250.5 318.5,240.7 322.5,243.7 326.5,245.8 330.5,245.8 334.5,241.7 338.5,247.2 342.5,250.5 346.5,250.0 350.5,248.7 354.5,263.5 358.5,271.6 362.5,268.2 366.5,268.0 370.5,268.4 374.5,275.0 378.5,282.6 382.5,295.3 386.5,300.7 390.5,293.0 394.5,291.9 398.5,272.2 402.5,264.2 406.5,265.3 410.5,261.1 414.5,252.1 418.5,240.0 422.5,249.2 426.5,252.8 430.5,249.3 434.5,242.6 438.5,242.4 442.5,237.7 446.5,234.3 450.5,232.0 454.5,230.4 458.5,244.9 462.5,254.8 466.5,249.3 470.5,266.4 474.5,294.2 478.5,287.9 482.5,288.8 486.5,286.1 490.5,283.2 494.5,277.7 498.5,274.5 502.5,271.0 506.5,274.8 510.5,272.6 514.5,275.9 518.5,276.8 522.5,270.9 526.5,266.3 530.5,268.0 534.5,258.7 538.5,275.4 542.5,285.2 546.5,267.6 550.5,252.4 554.5,262.5 558.5,244.0 562.5,233.2 566.5,246.0 570.5,233.1 574.5,243.4 578.5,271.4 582.5,264.8 586.5,267.3 590.5,263.0 594.5,261.8 598.5,245.4 602.5,239.7 606.5,243.6 610.5,243.5 614.5,254.9 618.5,256.6 622.5,249.0 626.5,254.0 630.5,269.9 634.5,278.4 638.5,280.8 642.5,283.6 646.5,283.8 650.5,281.3 654.5,290.3 658.5,299.8 662.5,301.3 666.5,297.3 670.5,297.3 674.5,297.0 678.5,289.8 682.5,282.8 686.5,271.8 690.5,271.6 694.5,268.3 698.5,267.2 702.5,254.3 706.5,265.4 710.5,266.8 714.5,264.0 718.5,268.7 722.5,273.6 726.5,271.7 730.5,272.6 734.5,259.3 738.5,254.9 742.5,247.1 746.5,255.6 750.5,256.0 754.5,285.6 758.5,286.4 762.5,285.1 766.5,286.9 770.5,285.7 774.5,276.4 778.5,275.3 782.5,264.5 786.5,257.8 790.5,263.9 794.5,261.1 798.5,256.0 802.5,254.5 806.5,249.9 810.5,261.9 814.5,276.5 818.5,279.6 822.5,269.3 826.5,277.4 830.5,271.0 834.5,267.4 838.5,268.2 842.5,285.1 846.5,285.5" fill="none" stroke="#00FF00" stroke-width="1"/>
<polyline points="2.5,294.7 6.5,316.5 10.5,308.1 14.5,306.4 18.5,304.8 22.5,297.9 26.5,298.4 30.5,296.6 34.5,297.9 38.5,304.8 42.5,301.6 46.5,282.5 50.5,296.1 54.5,304.4 58.5,300.6 62.5,300.5 66.5,288.3 70.5,286.2 74.5,295.7 78.5,307.3 82.5,311.2 86.5,307.3 90.5,337.1 94.5,319.6 98.5,280.1 102.5,291.5 106.5,289.7 110.5,290.6 114.5,307.3 118.5,310.7 122.5,306.7 126.5,306.3 130.5,297.8 134.5,291.7 138.5,287.8 142.5,286.4 146.5,286.5 150.5,294.7 154.5,290.0 158.5,293.6 162.5,298.6 166.5,321.0 170.5,325.5 174.5,318.6 178.5,323.0 182.5,314.3 186.5,299.8 190.5,283.5 194.5,264.2 198.5,276.3 202.5,290.0 206.5,282.6 210.5,281.6 214.5,279.3 218.5,277.2 222.5,274.3 226.5,277.2 230.5,275.1 234.5,288.6 238.5,286.6 242.5,287.8 246.5,291.4 250.5,304.7 254.5,300.2 258.5,301.7 262.5,314.1 266.5,318.8 270.5,316.6 274.5,292.4 278.5,294.9 282.5,301.8 286.5,298.5 290.5,303.4 294.5,298.8 298.5,298.4 302.5,285.3 306.5,276.9 310.5,271.2 314.5,278.2 318.5,274.1 322.5,256.6 326.5,252.0 330.5,253.9 334.5,271.2 338.5,272.0 342.5,270.6 346.5,271.7 350.5,283.1 354.5,286.6 358.5,291.7 362.5,293.2 366.5,292.8 370.5,291.7 374.5,301.6 378.5,307.9 382.5,306.5 386.5,304.2 390.5,307.6 394.5,303.6 398.5,306.9 402.5,301.7 406.5,281.6 410.5,292.2 414.5,293.0 418.5,295.6 422.5,265.6 426.5,257.6 430.5,259.2 434.5,259.6 438.5,252.3 442.5,249.4 446.5,247.1 450.5,251.9 454.5,267.4 458.5,270.6 462.5,277.0 466.5,308.4 470.5,314.6 474.5,301.3 478.5,301.9 482.5,296.6 486.5,302.4 490.5,303.4 494.5,303.9 498.5,292.0 502.5,287.3 506.5,278.4 510.5,283.8 514.5,283.7 518.5,289.7 522.5,291.2 526.5,291.4 530.5,287.8 534.5,320.4 538.5,317.5 542.5,314.7 546.5,307.7 550.5,303.4 554.5,279.5 558.5,282.8 562.5,281.7 566.5,252.4 570.5,280.5 574.5,287.1 578.5,276.2 582.5,292.8 586.5,292.3 590.5,293.4 594.5,278.8 598.5,278.8 602.5,269.5 606.5,261.1 610.5,270.1 614.5,265.6 618.5,265.8 622.5,282.2 626.5,296.1 630.5,305.5 634.5,302.5 638.5,302.7 642.5,291.7 646.5,297.8 650.5,309.1 654.5,316.5 658.5,313.3 662.5,313.0 666.5,308.9 670.5,308.9 674.5,309.8 678.5,313.2 682.5,310.8 686.5,301.6 690.5,302.5 694.5,315.2 698.5,315.7 702.5,313.4 706.5,277.8 710.5,273.2 714.5,279.8 718.5,279.5 722.5,278.4 726.5,282.8 730.5,282.5 734.5,287.6 738.5,298.3 742.5,297.9 746.5,306.4 750.5,304.2 754.5,290.3 758.5,288.2 762.5,291.5 766.5,291.6 770.5,292.1 774.5,293.9 778.5,288.7 782.5,286.8 786.5,284.1 790.5,268.6 794.5,267.6 798.5,268.3 802.5,271.7 806.5,290.2 810.5,300.8 814.5,308.9 818.5,307.6 822.5,309.1 826.5,289.1 830.5,288.0 834.5,302.9 838.5,304.0 842.5,299.0 846.5,293.6" fill="none" stroke="#00FF00" stroke-width="1"/>
<polyline points="2.5,286.7 6.5,299.0 10.5,300.9 14.5,289.5 18.5,296.2 22.5,290.5 26.5,294.3 30.5,294.3 34.5,297.1 38.5,281.0 42.5,280.7 46.5,278.2 50.5,292.4 54.5,296.2 58.5,284.8 62.5,280.1 66.5,274.4 70.5,282.9 74.5,290.5 78.5,301.8 82.5,304.7 86.5,305.6 90.5,252.7 94.5,263.1 98.5,273.5 102.5,284.8 106.5,282.0 110.5,288.6 114.5,301.8 118.5,302.8 122.5,295.2 126.5,290.5 130.5,286.7 134.5,285.8 138.5,283.9 142.5,284.8 146.5,281.0 150.5,264.0 154.5,279.1 158.5,284.8 162.5,294.3 166.5,313.2 170.5,314.1 174.5,305.6 178.5,290.5 182.5,277.3 186.5,262.1 190.5,254.6 194.5,254.6 198.5,271.6 202.5,280.1 206.5,275.4 210.5,274.4 214.5,267.8 218.5,272.5 222.5,265.9 226.5,258.4 230.5,270.6 234.5,281.0 238.5,280.1 242.5,268.8 246.5,284.8 250.5,295.2 254.5,293.3 258.5,299.9 262.5,309.4 266.5,283.9 270.5,282.9 274.5,268.8 278.5,286.7 282.5,291.4 286.5,274.4 290.5,293.3 294.5,282.0 298.5,275.4 302.5,270.6 306.5,269.7 310.5,268.8 314.5,254.6 318.5,248.9 322.5,247.0 326.5,250.8 330.5,251.7 334.5,266.9 338.5,260.2 342.5,254.6 346.5,267.8 350.5,275.4 354.5,282.0 358.5,287.7 362.5,272.5 366.5,281.0 370.5,286.7 374.5,297.1 378.5,301.8 382.5,303.7 386.5,301.8 390.5,295.2 394.5,296.2 398.5,277.3 402.5,275.4 406.5,267.8 410.5,286.7 414.5,263.1 418.5,253.6 422.5,255.5 426.5,256.5 430.5,250.8 434.5,246.1 438.5,245.1 442.5,239.5 446.5,237.6 450.5,248.9 454.5,260.2 458.5,264.0 462.5,273.5 466.5,299.0 470.5,299.0 474.5,295.2 478.5,290.5 482.5,292.4 486.5,299.9 490.5,287.7 494.5,284.8 498.5,277.3 502.5,275.4 506.5,277.3 510.5,282.0 514.5,280.1 518.5,287.7 522.5,275.4 526.5,273.5 530.5,284.8 534.5,310.3 538.5,294.3 542.5,295.2 546.5,273.5 550.5,265.0 554.5,274.4 558.5,250.8 562.5,247.0 566.5,249.8 570.5,273.5 574.5,272.5 578.5,275.4 582.5,288.6 586.5,275.4 590.5,270.6 594.5,265.0 598.5,250.8 602.5,248.0 606.5,258.4 610.5,264.0 614.5,258.4 618.5,261.2 622.5,277.3 626.5,286.7 630.5,299.0 634.5,285.8 638.5,290.5 642.5,286.7 646.5,295.2 650.5,303.7 654.5,311.3 658.5,304.7 662.5,305.6 666.5,299.0 670.5,304.7 674.5,306.6 678.5,293.3 682.5,290.5 686.5,276.3 690.5,294.3 694.5,304.7 698.5,275.4 702.5,271.6 706.5,267.8 710.5,270.6 714.5,277.3 718.5,274.4 722.5,276.3 726.5,281.0 730.5,275.4 734.5,264.0 738.5,290.5 742.5,263.1 746.5,289.5 750.5,287.7 754.5,286.7 758.5,287.7 762.5,290.5 766.5,289.5 770.5,286.7 774.5,279.1 778.5,280.1 782.5,267.8 786.5,265.0 790.5,265.9 794.5,262.1 798.5,258.4 802.5,268.8 806.5,282.9 810.5,292.4 814.5,302.8 818.5,285.8 822.5,279.1 826.5,284.8 830.5,274.4 834.5,296.2 838.5,287.7 842.5,292.4 846.5,288.6" fill="none" stroke="#FFFF00" stroke-width="1"/>
<polyline points="2.5,267.8 6.5,280.7 10.5,295.5 14.5,296.5 18.5,295.5 22.5,292.1 26.5,293.6 30.5,293.0 34.5,295.2 38.5,290.8 42.5,286.3 46.5,280.0 50.5,283.7 54.5,288.9 58.5,291.1 62.5,287.0 66.5,279.8 70.5,279.1 74.5,282.6 78.5,291.8 82.5,299.0 86.5,304.0 90.5,287.7 94.5,273.8 98.5,263.1 102.5,273.8 106.5,280.1 110.5,285.1 114.5,290.8 118.5,297.7 122.5,299.9 126.5,296.2 130.5,290.8 134.5,287.7 138.5,285.5 142.5,284.8 146.5,283.2 150.5,276.6 154.5,274.7 158.5,276.0 162.5,286.1 166.5,297.4 170.5,307.2 174.5,311.0 178.5,303.4 182.5,291.1 186.5,276.6 190.5,264.7 194.5,257.1 198.5,260.2 202.5,268.8 206.5,275.7 210.5,276.6 214.5,272.5 218.5,271.6 222.5,268.8 226.5,265.6 230.5,265.0 234.5,270.0 238.5,277.3 242.5,276.6 246.5,277.9 250.5,282.9 254.5,291.1 258.5,296.2 262.5,300.9 266.5,297.7 270.5,292.1 274.5,278.5 278.5,279.5 282.5,282.3 286.5,284.2 290.5,286.4 294.5,283.2 298.5,283.6 302.5,276.0 306.5,271.9 310.5,269.7 314.5,264.3 318.5,257.4 322.5,250.2 326.5,248.9 330.5,249.8 334.5,256.5 338.5,259.6 342.5,260.6 346.5,260.9 350.5,265.9 354.5,275.1 358.5,281.7 362.5,280.7 366.5,280.4 370.5,280.1 374.5,288.3 378.5,295.2 382.5,300.9 386.5,302.5 390.5,300.3 394.5,297.7 398.5,289.5 402.5,282.9 406.5,273.5 410.5,276.6 414.5,272.5 418.5,267.8 422.5,257.4 426.5,255.2 430.5,254.3 434.5,251.1 438.5,247.3 442.5,243.5 446.5,240.7 450.5,242.0 454.5,248.9 458.5,257.7 462.5,265.9 466.5,278.8 470.5,290.5 474.5,297.7 478.5,294.9 482.5,292.7 486.5,294.3 490.5,293.3 494.5,290.8 498.5,283.2 502.5,279.1 506.5,276.6 510.5,278.2 514.5,279.8 518.5,283.2 522.5,281.0 526.5,278.8 530.5,277.9 534.5,289.5 538.5,296.5 542.5,299.9 546.5,287.7 550.5,277.9 554.5,271.0 558.5,263.4 562.5,257.4 566.5,249.2 570.5,256.8 574.5,265.3 578.5,273.8 582.5,278.8 586.5,279.8 590.5,278.2 594.5,270.3 598.5,262.1 602.5,254.6 606.5,252.4 610.5,256.8 614.5,260.2 618.5,261.2 622.5,265.6 626.5,275.1 630.5,287.7 634.5,290.5 638.5,291.8 642.5,287.7 646.5,290.8 650.5,295.2 654.5,303.4 658.5,306.6 662.5,307.2 666.5,303.1 670.5,303.1 674.5,303.4 678.5,301.5 682.5,296.8 686.5,286.7 690.5,287.0 694.5,291.8 698.5,291.4 702.5,283.9 706.5,271.6 710.5,270.0 714.5,271.9 718.5,274.1 722.5,276.0 726.5,277.3 730.5,277.6 734.5,273.5 738.5,276.6 742.5,272.5 746.5,281.0 750.5,280.1 754.5,288.0 758.5,287.3 762.5,288.3 766.5,289.2 770.5,288.9 774.5,285.1 778.5,282.0 782.5,275.7 786.5,271.0 790.5,266.2 794.5,264.3 798.5,262.1 802.5,263.1 806.5,270.0 810.5,281.4 814.5,292.7 818.5,293.6 822.5,289.2 826.5,283.2 830.5,279.5 834.5,285.1 838.5,286.1 842.5,292.1 846.5,289.5" fill="none" stroke="#FF00FF" stroke-width="1"/>
<path d="M2 319v5h5z" fill="#778899"/>
</g>
<text x="6" y="244" font-size="9.75" fill="#fff" textLength="151" lengthAdjust="spacingAndGlyphs" stroke="#fff" stroke-width="0.3" >RSI(5) 39.7704  -&gt;Bands(3) 38.4104</text>
<rect x="1" y="4" width="1104" height="1" fill="#fff" />
<rect x="1" y="229" width="1104" height="1" fill="#fff" />
<rect x="1" y="4" width="1" height="226" fill="#fff" />
<rect x="1104" y="4" width="1" height="226" fill="#fff" />
<rect x="1" y="231" width="1104" height="1" fill="#fff" />
<rect x="1" y="324" width="1104" height="1" fill="#fff" />
<rect x="1" y="231" width="1" height="94" fill="#fff" />
<rect x="1104" y="231" width="1" height="94" fill="#fff" />
<rect x="1103" y="117" width="3" height="45" fill="#fff" />
<path d="M635 5h9l-4.5 5z" fill="#778899"/>
<rect x="1105" y="28" width="2" height="1" fill="#fff" />
<text x="1111" y="31" font-size="9.75" fill="#fff" textLength="31" lengthAdjust="spacingAndGlyphs" stroke="#fff" stroke-width="0.3" >1223.36</text>
<rect x="1105" y="61" width="2" height="1" fill="#fff" />
<text x="1111" y="64" font-size="9.75" fill="#fff" textLength="31" lengthAdjust="spacingAndGlyphs" stroke="#fff" stroke-width="0.3" >1217.21</text>
<rect x="1105" y="94" width="2" height="1" fill="#fff" />
<text x="1111" y="97" font-size="9.75" fill="#fff" textLength="31" lengthAdjust="spacingAndGlyphs" stroke="#fff" stroke-width="0.3" >1210.91</text>
<rect x="1105" y="127" width="2" height="1" fill="#fff" />
<text x="1111" y="130" font-size="9.75" fill="#fff" textLength="31" lengthAdjust="spacingAndGlyphs" stroke="#fff" stroke-width="0.3" >1204.76</text>
<rect x="1105" y="160" width="2" height="1" fill="#fff" />
<text x="1111" y="163" font-size="9.75" fill="#fff" textLength="31" lengthAdjust="spacingAndGlyphs" stroke="#fff" stroke-width="0.3" >1198.61</text>
<rect x="1105" y="193" width="2" height="1" fill="#fff" />
<text x="1111" y="196" font-size="9.75" fill="#fff" textLength="31" lengthAdjust="spacingAndGlyphs" stroke="#fff" stroke-width="0.3" >1192.46</text>
<rect x="1105" y="226" width="2" height="1" fill="#fff" />
<text x="1111" y="229" font-size="9.75" fill="#fff" textLength="31" lengthAdjust="spacingAndGlyphs" stroke="#fff" stroke-width="0.3" >1186.31</text>
<rect x="1107" y="136" width="37" height="12" fill="#fff" />
<text x="1111" y="145" font-size="9.75" fill="#000" textLength="31" lengthAdjust="spacingAndGlyphs" stroke="#000" stroke-width="0.3" >1201.99</text>
<rect x="1105" y="233" width="1" height="1" fill="#fff" />
<text x="1109" y="242" font-size="9.75" fill="#fff" textLength="14" lengthAdjust="spacingAndGlyphs" stroke="#fff" stroke-width="0.3" >100</text>
<rect x="1105" y="323" width="1" height="1" fill="#fff" />
<text x="1108.5" y="321" font-size="9.75" fill="#fff" stroke="#fff" stroke-width="0.3" >0</text>
<rect x="2" y="324" width="1" height="4" fill="#fff" />
<rect x="66" y="324" width="1" height="4" fill="#fff" />
<rect x="130" y="324" width="1" height="4" fill="#fff" />
<rect x="194" y="324" width="1" height="4" fill="#fff" />
<rect x="258" y="324" width="1" height="4" fill="#fff" />
<rect x="322" y="324" width="1" height="4" fill="#fff" />
<text x="321" y="337" font-size="9.75" fill="#fff" textLength="54" lengthAdjust="spacingAndGlyphs" stroke="#fff" stroke-width="0.3" >25 Feb 03:00</text>
<rect x="386" y="324" width="1" height="4" fill="#fff" />
<text x="385" y="337" font-size="9.75" fill="#fff" textLength="54" lengthAdjust="spacingAndGlyphs" stroke="#fff" stroke-width="0.3" >25 Feb 19:00</text>
<rect x="450" y="324" width="1" height="4" fill="#fff" />
<text x="449" y="337" font-size="9.75" fill="#fff" textLength="54" lengthAdjust="spacingAndGlyphs" stroke="#fff" stroke-width="0.3" >26 Feb 12:00</text>
<rect x="514" y="324" width="1" height="4" fill="#fff" />
<text x="513" y="337" font-size="9.75" fill="#fff" textLength="54" lengthAdjust="spacingAndGlyphs" stroke="#fff" stroke-width="0.3" >27 Feb 05:00</text>
<rect x="578" y="324" width="1" height="4" fill="#fff" />
<text x="577" y="337" font-size="9.75" fill="#fff" textLength="54" lengthAdjust="spacingAndGlyphs" stroke="#fff" stroke-width="0.3" >27 Feb 21:00</text>
<rect x="642" y="324" width="1" height="4" fill="#fff" />
<text x="641" y="337" font-size="9.75" fill="#fff" textLength="49.5" lengthAdjust="spacingAndGlyphs" stroke="#fff" stroke-width="0.3" >2 Mar 14:00</text>
<rect x="706" y="324" width="1" height="4" fill="#fff" />
<text x="705" y="337" font-size="9.75" fill="#fff" textLength="49.5" lengthAdjust="spacingAndGlyphs" stroke="#fff" stroke-width="0.3" >3 Mar 07:00</text>
<rect x="770" y="324" width="1" height="4" fill="#fff" />
<text x="769" y="337" font-size="9.75" fill="#fff" textLength="49.5" lengthAdjust="spacingAndGlyphs" stroke="#fff" stroke-width="0.3" >3 Mar 23:00</text>
<rect x="834" y="324" width="1" height="4" fill="#fff" />
<text x="833" y="337" font-size="9.75" fill="#fff" textLength="49.5" lengthAdjust="spacingAndGlyphs" stroke="#fff" stroke-width="0.3" >4 Mar 16:00</text>
<text x="289.7" y="337" font-size="9.75" fill="#fff" textLength="21.4" lengthAdjust="spacingAndGlyphs" stroke="#fff" stroke-width="0.3" >10:00</text>
<path d="M0 326h284l1 1v14h-285z" fill="#fff"/>
<text x="269" y="337" font-size="9.75" fill="#FF6464" textLength="11.2" lengthAdjust="spacingAndGlyphs" stroke="#FF6464" stroke-width="0.3" >60</text>
<rect x="0" y="341" width="1144" height="1" fill="#000" />
<rect x="0" y="342" width="1144" height="2" fill="#fff" />
<rect x="0" y="344" width="1144" height="20" fill="#ECE9D8" />
<rect x="68" y="344" width="1076" height="1" fill="#000" />
<rect x="2" y="344" width="66" height="18" fill="#fff" />
<rect x="1" y="344" width="1" height="19" fill="#000" />
<rect x="68" y="344" width="1" height="19" fill="#000" />
<rect x="1" y="362" width="68" height="1" fill="#000" />
<text x="12.5" y="357" font-size="11" fill="#000" textLength="42.5" lengthAdjust="spacingAndGlyphs" stroke="#000" stroke-width="0.22" shape-rendering="auto">GOLD,H1</text>
<text x="81" y="357" font-size="11" fill="#6E6B5E" textLength="43" lengthAdjust="spacingAndGlyphs" stroke="#6E6B5E" stroke-width="0.22" >GOLD,H4</text>
<rect x="137" y="347" width="1" height="13" fill="#6E6B5E" />
<path d="M1121 354.5l4 -4v8z" fill="#9A9A9A"/><path d="M1142 354.5l-4 -4v8z" fill="#9A9A9A"/>
<rect x="0" y="364" width="1144" height="1" fill="#fff" />
<rect x="0" y="365" width="1144" height="3" fill="#ECE9D8" />
<rect x="0" y="368" width="11" height="14" fill="#ECE9D8" />
<path d="M1 370h2l1.5 1.5l1.5 -1.5h2v1l-2 2.5l2 2.5v1h-2l-1.5 -1.5l-1.5 1.5h-2v-1l2 -2.5l-2 -2.5z" fill="#000" shape-rendering="auto"/>
<defs><linearGradient id="bl" x1="0" x2="0.25" y1="0" y2="1"><stop offset="0" stop-color="#3F95FF"/><stop offset="1" stop-color="#1C6AEE"/></linearGradient></defs>
<rect x="0" y="382" width="11" height="126" fill="url(#bl)" />
<rect x="11" y="368" width="1" height="140" fill="#E4E0CE" />
<rect x="12" y="368" width="1" height="140" fill="#B9B5A2" />
<rect x="12" y="368" width="1132" height="1" fill="#ACA899" />
<rect x="13" y="369" width="1131" height="16" fill="#EDEADB" />
<rect x="12" y="385" width="1132" height="1" fill="#E6E3D1" />
<rect x="12" y="386" width="1132" height="1" fill="#DBD8C5" />
<rect x="12" y="387" width="1132" height="1" fill="#D0CCB9" />
<rect x="12" y="388" width="1132" height="1" fill="#C8C5B2" />
<rect x="13" y="389" width="1131" height="1" fill="#C9C9C9" />
<rect x="13" y="390" width="1131" height="19" fill="#fff" />
<rect x="13" y="409" width="1131" height="1" fill="#C9C9C9" />
<rect x="13" y="410" width="1131" height="19" fill="#ECECEC" />
<rect x="13" y="429" width="1131" height="1" fill="#C9C9C9" />
<rect x="13" y="430" width="1131" height="19" fill="#fff" />
<rect x="13" y="449" width="1131" height="1" fill="#C9C9C9" />
<rect x="13" y="450" width="1131" height="19" fill="#ECECEC" />
<rect x="13" y="469" width="1131" height="1" fill="#C9C9C9" />
<rect x="13" y="470" width="1131" height="19" fill="#fff" />
<rect x="13" y="489" width="1131" height="19" fill="#C8C8C8" />
<rect x="111" y="389" width="1" height="100" fill="#C9C9C9" />
<rect x="281" y="389" width="1" height="100" fill="#C9C9C9" />
<rect x="358" y="389" width="1" height="100" fill="#C9C9C9" />
<rect x="420" y="389" width="1" height="100" fill="#C9C9C9" />
<rect x="497" y="389" width="1" height="100" fill="#C9C9C9" />
<rect x="574" y="389" width="1" height="100" fill="#C9C9C9" />
<rect x="651" y="389" width="1" height="100" fill="#C9C9C9" />
<rect x="728" y="389" width="1" height="100" fill="#C9C9C9" />
<rect x="898" y="389" width="1" height="100" fill="#C9C9C9" />
<rect x="975" y="389" width="1" height="100" fill="#C9C9C9" />
<rect x="1052" y="389" width="1" height="100" fill="#C9C9C9" />
<rect x="653" y="431" width="74" height="17" fill="#62EC62" />
<defs><linearGradient id="dg" x1="1" y1="0" x2="0" y2="1"><stop offset="0.3" stop-color="#fff"/><stop offset="1" stop-color="#DCDCDC"/></linearGradient><radialGradient id="rb" cx="0.38" cy="0.35" r="0.7"><stop offset="0" stop-color="#FF7A48"/><stop offset="0.5" stop-color="#F0400C"/><stop offset="1" stop-color="#E03000"/></radialGradient><radialGradient id="bb" cx="0.38" cy="0.35" r="0.7"><stop offset="0" stop-color="#62C8FF"/><stop offset="0.5" stop-color="#149CF2"/><stop offset="1" stop-color="#0C84DC"/></radialGradient></defs>
<g shape-rendering="auto">
<text x="35" y="403" font-size="11" fill="#000" textLength="53.5" lengthAdjust="spacingAndGlyphs" stroke="#000" stroke-width="0.22" >123115049</text>
<text x="278.6" y="403" font-size="11" fill="#000" text-anchor="end" stroke="#000" stroke-width="0.22" >2015.03.02 01:01:47</text>
<text x="355.6" y="403" font-size="11" fill="#000" text-anchor="end" stroke="#000" stroke-width="0.22" >sell</text>
<text x="417.6" y="403" font-size="11" fill="#000" text-anchor="end" stroke="#000" stroke-width="0.22" >5.00</text>
<text x="494.6" y="403" font-size="11" fill="#000" text-anchor="end" stroke="#000" stroke-width="0.22" >gold</text>
<text x="571.6" y="403" font-size="11" fill="#000" text-anchor="end" stroke="#000" stroke-width="0.22" >1215.00</text>
<text x="648.6" y="403" font-size="11" fill="#000" text-anchor="end" stroke="#000" stroke-width="0.22" >0.00</text>
<text x="725.6" y="403" font-size="11" fill="#000" text-anchor="end" stroke="#000" stroke-width="0.22" >1210.00</text>
<text x="895.6" y="403" font-size="11" fill="#000" text-anchor="end" stroke="#000" stroke-width="0.22" >2015.03.02 16:56:02</text>
<text x="972.6" y="403" font-size="11" fill="#000" text-anchor="end" stroke="#000" stroke-width="0.22" >1212.05</text>
<text x="1049.6" y="403" font-size="11" fill="#000" text-anchor="end" stroke="#000" stroke-width="0.22" >0.00</text>
<text x="1140.4" y="403" font-size="11" fill="#000" text-anchor="end" stroke="#000" stroke-width="0.22" >1 475.00</text>
<path d="M17 392.5h7l3.5 3.5v9.2q0 .8 -.8 .8h-9.4q-.8 0 -.8 -.8v-11.9q0 -.8 .8 -.8z" fill="url(#dg)" stroke="#555555" stroke-width="1"/>
<path d="M24 393v3h3" fill="none" stroke="#808080" stroke-width="1"/>
<path d="M18 407h9.5M28.5 397v9" fill="none" stroke="#CFCFCF" stroke-width="1"/>
<circle cx="26.6" cy="403.4" r="2.9" fill="url(#rb)" stroke="#A82A06" stroke-width="0.9"/>
<text x="35" y="423" font-size="11" fill="#000" textLength="53.5" lengthAdjust="spacingAndGlyphs" stroke="#000" stroke-width="0.22" >123161862</text>
<text x="278.6" y="423" font-size="11" fill="#000" text-anchor="end" stroke="#000" stroke-width="0.22" >2015.03.02 18:44:57</text>
<text x="355.6" y="423" font-size="11" fill="#000" text-anchor="end" stroke="#000" stroke-width="0.22" >buy</text>
<text x="417.6" y="423" font-size="11" fill="#000" text-anchor="end" stroke="#000" stroke-width="0.22" >5.00</text>
<text x="494.6" y="423" font-size="11" fill="#000" text-anchor="end" stroke="#000" stroke-width="0.22" >gold</text>
<text x="571.6" y="423" font-size="11" fill="#000" text-anchor="end" stroke="#000" stroke-width="0.22" >1208.52</text>
<text x="648.6" y="423" font-size="11" fill="#000" text-anchor="end" stroke="#000" stroke-width="0.22" >0.00</text>
<text x="725.6" y="423" font-size="11" fill="#000" text-anchor="end" stroke="#000" stroke-width="0.22" >2150.00</text>
<text x="895.6" y="423" font-size="11" fill="#000" text-anchor="end" stroke="#000" stroke-width="0.22" >2015.03.02 19:17:22</text>
<text x="972.6" y="423" font-size="11" fill="#000" text-anchor="end" stroke="#000" stroke-width="0.22" >1208.64</text>
<text x="1049.6" y="423" font-size="11" fill="#000" text-anchor="end" stroke="#000" stroke-width="0.22" >0.00</text>
<text x="1140.4" y="423" font-size="11" fill="#000" text-anchor="end" stroke="#000" stroke-width="0.22" >60.00</text>
<path d="M17 412.5h7l3.5 3.5v9.2q0 .8 -.8 .8h-9.4q-.8 0 -.8 -.8v-11.9q0 -.8 .8 -.8z" fill="url(#dg)" stroke="#555555" stroke-width="1"/>
<path d="M24 413v3h3" fill="none" stroke="#808080" stroke-width="1"/>
<path d="M18 427h9.5M28.5 417v9" fill="none" stroke="#CFCFCF" stroke-width="1"/>
<circle cx="26.6" cy="423.4" r="2.9" fill="url(#bb)" stroke="#0E68B4" stroke-width="0.9"/>
<text x="35" y="443" font-size="11" fill="#000" textLength="53.5" lengthAdjust="spacingAndGlyphs" stroke="#000" stroke-width="0.22" >123164815</text>
<text x="278.6" y="443" font-size="11" fill="#000" text-anchor="end" stroke="#000" stroke-width="0.22" >2015.03.02 20:46:00</text>
<text x="355.6" y="443" font-size="11" fill="#000" text-anchor="end" stroke="#000" stroke-width="0.22" >buy</text>
<text x="417.6" y="443" font-size="11" fill="#000" text-anchor="end" stroke="#000" stroke-width="0.22" >5.00</text>
<text x="494.6" y="443" font-size="11" fill="#000" text-anchor="end" stroke="#000" stroke-width="0.22" >gold</text>
<text x="571.6" y="443" font-size="11" fill="#000" text-anchor="end" stroke="#000" stroke-width="0.22" >1208.81</text>
<text x="648.6" y="443" font-size="11" fill="#000" text-anchor="end" stroke="#000" stroke-width="0.22" >0.00</text>
<text x="725.6" y="443" font-size="11" fill="#000" text-anchor="end" stroke="#000" stroke-width="0.22" >1212.00</text>
<text x="895.6" y="443" font-size="11" fill="#000" text-anchor="end" stroke="#000" stroke-width="0.22" >2015.03.03 16:33:04</text>
<text x="972.6" y="443" font-size="11" fill="#000" text-anchor="end" stroke="#000" stroke-width="0.22" >1212.00</text>
<text x="1049.6" y="443" font-size="11" fill="#000" text-anchor="end" stroke="#000" stroke-width="0.22" >-9.20</text>
<text x="1140.4" y="443" font-size="11" fill="#000" text-anchor="end" stroke="#000" stroke-width="0.22" >1 595.00</text>
<path d="M17 432.5h7l3.5 3.5v9.2q0 .8 -.8 .8h-9.4q-.8 0 -.8 -.8v-11.9q0 -.8 .8 -.8z" fill="url(#dg)" stroke="#555555" stroke-width="1"/>
<path d="M24 433v3h3" fill="none" stroke="#808080" stroke-width="1"/>
<path d="M18 447h9.5M28.5 437v9" fill="none" stroke="#CFCFCF" stroke-width="1"/>
<circle cx="26.6" cy="443.4" r="2.9" fill="url(#bb)" stroke="#0E68B4" stroke-width="0.9"/>
<text x="35" y="463" font-size="11" fill="#000" textLength="53.5" lengthAdjust="spacingAndGlyphs" stroke="#000" stroke-width="0.22" >123164820</text>
<text x="278.6" y="463" font-size="11" fill="#000" text-anchor="end" stroke="#000" stroke-width="0.22" >2015.03.03 16:33:17</text>
<text x="355.6" y="463" font-size="11" fill="#000" text-anchor="end" stroke="#000" stroke-width="0.22" >sell</text>
<text x="417.6" y="463" font-size="11" fill="#000" text-anchor="end" stroke="#000" stroke-width="0.22" >5.00</text>
<text x="494.6" y="463" font-size="11" fill="#000" text-anchor="end" stroke="#000" stroke-width="0.22" >gold</text>
<text x="571.6" y="463" font-size="11" fill="#000" text-anchor="end" stroke="#000" stroke-width="0.22" >1213.00</text>
<text x="648.6" y="463" font-size="11" fill="#000" text-anchor="end" stroke="#000" stroke-width="0.22" >0.00</text>
<text x="725.6" y="463" font-size="11" fill="#000" text-anchor="end" stroke="#000" stroke-width="0.22" >1192.00</text>
<text x="895.6" y="463" font-size="11" fill="#000" text-anchor="end" stroke="#000" stroke-width="0.22" >2015.03.03 16:49:37</text>
<text x="972.6" y="463" font-size="11" fill="#000" text-anchor="end" stroke="#000" stroke-width="0.22" >1212.46</text>
<text x="1049.6" y="463" font-size="11" fill="#000" text-anchor="end" stroke="#000" stroke-width="0.22" >0.00</text>
<text x="1140.4" y="463" font-size="11" fill="#000" text-anchor="end" stroke="#000" stroke-width="0.22" >270.00</text>
<path d="M17 452.5h7l3.5 3.5v9.2q0 .8 -.8 .8h-9.4q-.8 0 -.8 -.8v-11.9q0 -.8 .8 -.8z" fill="url(#dg)" stroke="#555555" stroke-width="1"/>
<path d="M24 453v3h3" fill="none" stroke="#808080" stroke-width="1"/>
<path d="M18 467h9.5M28.5 457v9" fill="none" stroke="#CFCFCF" stroke-width="1"/>
<circle cx="26.6" cy="463.4" r="2.9" fill="url(#rb)" stroke="#A82A06" stroke-width="0.9"/>
<text x="35" y="483" font-size="11" fill="#000" textLength="53.5" lengthAdjust="spacingAndGlyphs" stroke="#000" stroke-width="0.22" >123212836</text>
<text x="278.6" y="483" font-size="11" fill="#000" text-anchor="end" stroke="#000" stroke-width="0.22" >2015.03.03 18:33:03</text>
<text x="355.6" y="483" font-size="11" fill="#000" text-anchor="end" stroke="#000" stroke-width="0.22" >buy</text>
<text x="417.6" y="483" font-size="11" fill="#000" text-anchor="end" stroke="#000" stroke-width="0.22" >2.00</text>
<text x="494.6" y="483" font-size="11" fill="#000" text-anchor="end" stroke="#000" stroke-width="0.22" >gold</text>
<text x="571.6" y="483" font-size="11" fill="#000" text-anchor="end" stroke="#000" stroke-width="0.22" >1203.94</text>
<text x="648.6" y="483" font-size="11" fill="#000" text-anchor="end" stroke="#000" stroke-width="0.22" >0.00</text>
<text x="725.6" y="483" font-size="11" fill="#000" text-anchor="end" stroke="#000" stroke-width="0.22" >0.00</text>
<text x="895.6" y="483" font-size="11" fill="#000" text-anchor="end" stroke="#000" stroke-width="0.22" >2015.03.03 19:06:13</text>
<text x="972.6" y="483" font-size="11" fill="#000" text-anchor="end" stroke="#000" stroke-width="0.22" >1204.67</text>
<text x="1049.6" y="483" font-size="11" fill="#000" text-anchor="end" stroke="#000" stroke-width="0.22" >0.00</text>
<text x="1140.4" y="483" font-size="11" fill="#000" text-anchor="end" stroke="#000" stroke-width="0.22" >146.00</text>
<path d="M17 472.5h7l3.5 3.5v9.2q0 .8 -.8 .8h-9.4q-.8 0 -.8 -.8v-11.9q0 -.8 .8 -.8z" fill="url(#dg)" stroke="#555555" stroke-width="1"/>
<path d="M24 473v3h3" fill="none" stroke="#808080" stroke-width="1"/>
<path d="M18 487h9.5M28.5 477v9" fill="none" stroke="#CFCFCF" stroke-width="1"/>
<circle cx="26.6" cy="483.4" r="2.9" fill="url(#bb)" stroke="#0E68B4" stroke-width="0.9"/>
<text x="24.5" y="383" font-size="11" fill="#000" textLength="27" lengthAdjust="spacingAndGlyphs" stroke="#000" stroke-width="0.22" >Order</text>
<text x="276.5" y="383" font-size="11" fill="#000" text-anchor="end" stroke="#000" stroke-width="0.22" >Time</text>
<text x="353.5" y="383" font-size="11" fill="#000" text-anchor="end" stroke="#000" stroke-width="0.22" >Type</text>
<text x="415.5" y="383" font-size="11" fill="#000" text-anchor="end" stroke="#000" stroke-width="0.22" >Size</text>
<text x="492.5" y="383" font-size="11" fill="#000" text-anchor="end" stroke="#000" stroke-width="0.22" >Symbol</text>
<text x="569.5" y="383" font-size="11" fill="#000" text-anchor="end" stroke="#000" stroke-width="0.22" >Price</text>
<text x="646.5" y="383" font-size="11" fill="#000" text-anchor="end" stroke="#000" stroke-width="0.22" >S / L</text>
<text x="723.5" y="383" font-size="11" fill="#000" text-anchor="end" stroke="#000" stroke-width="0.22" >T / P</text>
<text x="893.5" y="383" font-size="11" fill="#000" text-anchor="end" stroke="#000" stroke-width="0.22" >Time</text>
<text x="970.5" y="383" font-size="11" fill="#000" text-anchor="end" stroke="#000" stroke-width="0.22" >Price</text>
<text x="1047.5" y="383" font-size="11" fill="#000" text-anchor="end" stroke="#000" stroke-width="0.22" >Swap</text>
<text x="1137.5" y="383" font-size="11" fill="#000" text-anchor="end" stroke="#000" stroke-width="0.22" >Profit</text>
</g>
<rect x="111" y="372" width="1" height="13" fill="#C5C2B0" />
<rect x="112" y="372" width="1" height="13" fill="#fff" />
<rect x="281" y="372" width="1" height="13" fill="#C5C2B0" />
<rect x="282" y="372" width="1" height="13" fill="#fff" />
<rect x="358" y="372" width="1" height="13" fill="#C5C2B0" />
<rect x="359" y="372" width="1" height="13" fill="#fff" />
<rect x="420" y="372" width="1" height="13" fill="#C5C2B0" />
<rect x="421" y="372" width="1" height="13" fill="#fff" />
<rect x="497" y="372" width="1" height="13" fill="#C5C2B0" />
<rect x="498" y="372" width="1" height="13" fill="#fff" />
<rect x="574" y="372" width="1" height="13" fill="#C5C2B0" />
<rect x="575" y="372" width="1" height="13" fill="#fff" />
<rect x="651" y="372" width="1" height="13" fill="#C5C2B0" />
<rect x="652" y="372" width="1" height="13" fill="#fff" />
<rect x="728" y="372" width="1" height="13" fill="#C5C2B0" />
<rect x="729" y="372" width="1" height="13" fill="#fff" />
<rect x="898" y="372" width="1" height="13" fill="#C5C2B0" />
<rect x="899" y="372" width="1" height="13" fill="#fff" />
<rect x="975" y="372" width="1" height="13" fill="#C5C2B0" />
<rect x="976" y="372" width="1" height="13" fill="#fff" />
<rect x="1052" y="372" width="1" height="13" fill="#C5C2B0" />
<rect x="1053" y="372" width="1" height="13" fill="#fff" />
<rect x="1142" y="372" width="1" height="13" fill="#C5C2B0" />
<path d="M65.5 382.5l3.5 -6.5" stroke="#8A8878" stroke-width="1" fill="none" shape-rendering="auto"/><path d="M69 376l3.5 6.5h-7" stroke="#fff" stroke-width="1" fill="none" shape-rendering="auto"/>
<g shape-rendering="auto">
<circle cx="23.5" cy="499.5" r="3.2" fill="#CFCFCF" stroke="#8C8C8C" stroke-width="1"/><path d="M21.8 501.2l3.4 -3.4" stroke="#F0F0F0" stroke-width="1"/>
<text x="34.5" y="503" font-size="11" fill="#000" textLength="364.5" lengthAdjust="spacingAndGlyphs" font-weight="bold" stroke="#000" stroke-width="0.22" >Profit/Loss: 3 536.80  Credit: 0.00  Deposit: 0.00  Withdrawal: 0.00</text>
<text x="1092" y="503" font-size="11" fill="#000" textLength="49.5" lengthAdjust="spacingAndGlyphs" font-weight="bold" stroke="#000" stroke-width="0.22" >3 536.80</text>
</g>
</svg></body></html>
